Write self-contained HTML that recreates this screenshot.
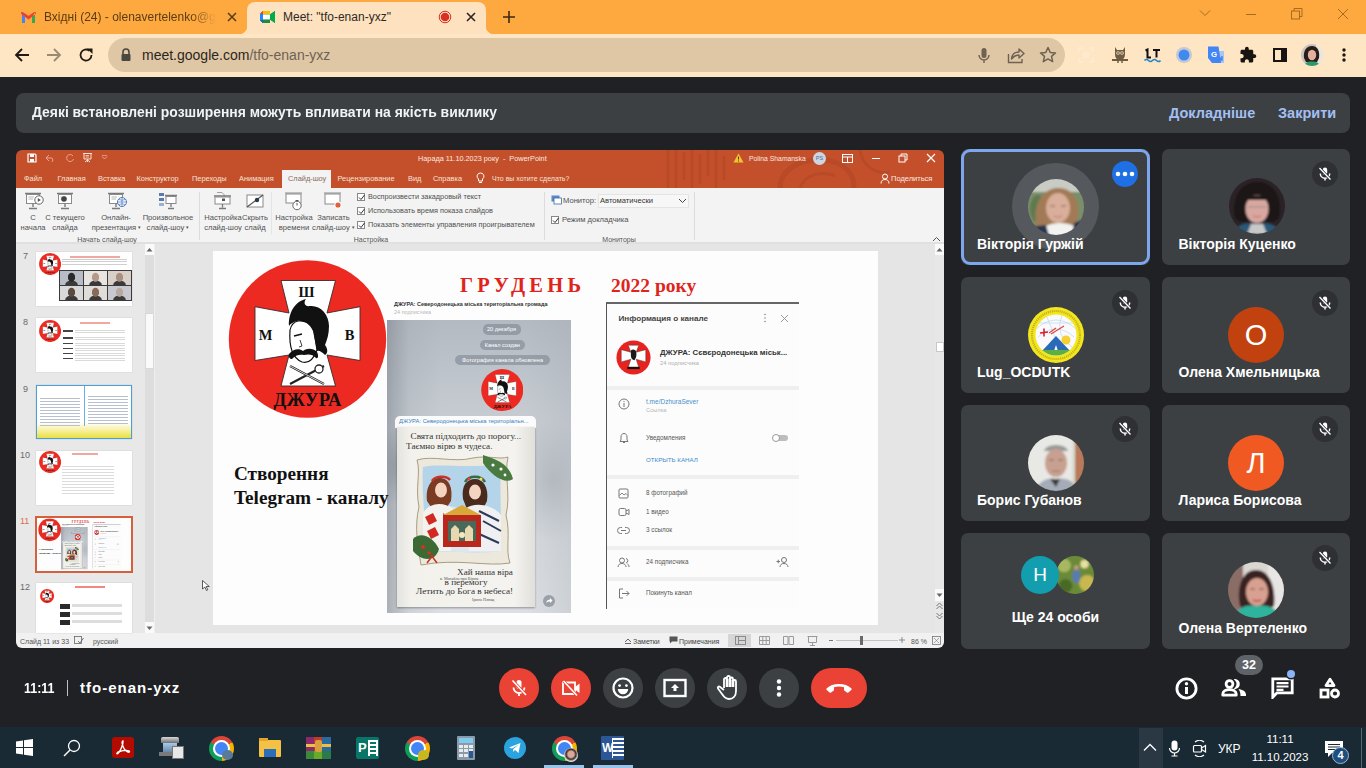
<!DOCTYPE html>
<html><head><meta charset="utf-8">
<style>
*{margin:0;padding:0;box-sizing:border-box}
html,body{width:1366px;height:768px;overflow:hidden;background:#202124;font-family:"Liberation Sans",sans-serif}
.a{position:absolute}
#tabs{left:0;top:0;width:1366px;height:34px;background:#FEA940}
#tool{left:0;top:34px;width:1366px;height:43px;background:#FEE5C4}
#meet{left:0;top:77px;width:1366px;height:651px;background:#202124}
#taskbar{left:0;top:727px;width:1366px;height:41px;background:#1A2A35}
.banner{left:16px;top:93px;width:1334px;height:40px;background:#3C4043;border-radius:8px}
.tile{width:188px;height:116px;background:#3C4043;border-radius:7px}
.name{position:absolute;left:16px;bottom:14px;color:#fff;font-weight:bold;font-size:14px;white-space:nowrap}
</style></head><body>
<svg width="0" height="0" style="position:absolute"><defs><g id="logo">
<circle cx="307.5" cy="339" r="78.7" fill="#EC2A22"/>
<path d="M281 280.5H335.5L327 313L360 306.7V360.5L327 355L335.5 386H281L289 355L255 360.5V306.7L289 313Z" fill="#fff" stroke="#3A2A2A" stroke-width="0.9" stroke-linejoin="miter"/>
<text x="306.5" y="296.5" text-anchor="middle" font-family="Liberation Serif" font-weight="bold" font-size="14.5" fill="#111">Ш</text>
<text x="265.5" y="339.5" text-anchor="middle" font-family="Liberation Serif" font-weight="bold" font-size="14.5" fill="#111">М</text>
<text x="349.5" y="339.5" text-anchor="middle" font-family="Liberation Serif" font-weight="bold" font-size="14.5" fill="#111">В</text>
<path d="M290 330C289 345 292 358 302 362C309 364 314 358 317 350L314 330C311 323 304 320 298 321C294 322 291 325 290 330Z" fill="#fff" stroke="#111" stroke-width="1.2"/>
<path d="M289 326C288 312 296 301 306 299C303 303 305 307 310 306C320 305 329 314 329 326C329 334 327 340 325 345C328 349 328 353 325 355C322 352 319 350 317 351L313 331C310 324 304 320 297 321C293 322 290 324 289 326Z" fill="#111"/>
<path d="M308 304C312 300 316 302 314 306" fill="none" stroke="#fff" stroke-width=".8"/>
<path d="M294 336L302 334" stroke="#111" stroke-width="1.4"/>
<path d="M300 340L302 346L299 347" fill="none" stroke="#111" stroke-width=".8"/>
<path d="M289 354C293 349 299 348 303 351C307 348 313 348 317 352C319 356 318 359 316 358C313 354 308 354 304 355C300 354 295 355 292 359C290 359 288 357 289 354Z" fill="#111"/>
<path d="M290 366L324 384M324 366L290 384" stroke="#222" stroke-width="2.2"/>
<path d="M290 366L324 384" stroke="#fff" stroke-width="0.8"/>
<circle cx="319" cy="369" r="4" fill="#fff" stroke="#222" stroke-width="1.3"/>
<text x="307.5" y="406" text-anchor="middle" font-family="Liberation Serif" font-weight="bold" font-size="18.5" fill="#111" letter-spacing="0.3">ДЖУРА</text>
</g></defs></svg>
<div id="tabs" class="a"></div>
<div id="tool" class="a"></div>
<div id="meet" class="a"></div>
<div id="taskbar" class="a"></div>

<!-- CHROME HEADER -->
<div class="a" style="left:247px;top:2px;width:239px;height:32px;background:#FEE1BE;border-radius:8px 8px 0 0"></div>
<div class="a" style="left:239px;top:26px;width:8px;height:8px;background:radial-gradient(circle at 0 0,#FEA940 8px,#FEE1BE 8.5px)"></div>
<div class="a" style="left:486px;top:26px;width:8px;height:8px;background:radial-gradient(circle at 100% 0,#FEA940 8px,#FEE1BE 8.5px)"></div>
<svg class="a" style="left:21px;top:12px" width="15" height="11" viewBox="0 0 15 11"><path d="M1 2 L1 11 L4 11 L4 4.5Z" fill="#4285F4"/><path d="M11 4.5 L11 11 L14 11 L14 2Z" fill="#34A853"/><path d="M1 1.5 L7.5 6.5 L14 1.5 L14 0.5 L11 2.5 L7.5 5 L4 2.5 L1 0.5Z" fill="#EA4335" stroke="#EA4335" stroke-width="1.6"/><path d="M14 0.5 L14 2.5 L12 3.8Z" fill="#FBBC04"/></svg>
<div class="a" style="left:44px;top:9px;width:172px;height:18px;overflow:hidden;white-space:nowrap;font-size:12px;line-height:17px;color:#5A3C14;-webkit-mask-image:linear-gradient(90deg,#000 85%,transparent)">Вхідні (24) - olenavertelenko@gmail.com</div>
<svg class="a" style="left:227px;top:12px" width="10" height="10" viewBox="0 0 10 10"><path d="M1 1L9 9M9 1L1 9" stroke="#5A3E16" stroke-width="1.6"/></svg>
<svg class="a" style="left:260px;top:11px" width="15" height="12" viewBox="0 0 15 12"><path d="M3 0 H10 V3.5 L15 0 V12 L10 8.5 V12 H3 L0 9 V3 Z" fill="#00832D"/><path d="M3 0 H10 V3.5 H3Z" fill="#FBBC04"/><path d="M0 3 L3 0 V9 L0 9Z" fill="#4285F4"/><path d="M0 9 H10 V12 H3Z" fill="#1E8E3E"/><path d="M10 3.5 L15 0 V12 L10 8.5Z" fill="#00AC47"/><rect x="3" y="3.5" width="7" height="5" fill="#fff"/><path d="M0 3 H3 V9 H0Z" fill="#2684FC"/><path d="M3 9 V12 L0 9Z" fill="#0066DA"/><path d="M0 3 L3 0 V3Z" fill="#EA4335"/></svg>
<div class="a" style="left:283px;top:9px;white-space:nowrap;font-size:12px;line-height:17px;color:#2E2A24">Meet: "tfo-enan-yxz"</div>
<svg class="a" style="left:438px;top:10px" width="14" height="14" viewBox="0 0 14 14"><circle cx="7" cy="7" r="5.8" fill="none" stroke="#D93025" stroke-width="1"/><circle cx="7" cy="7" r="4.3" fill="#D93025"/></svg>
<svg class="a" style="left:466px;top:12px" width="10" height="10" viewBox="0 0 10 10"><path d="M1 1L9 9M9 1L1 9" stroke="#2A2520" stroke-width="1.6"/></svg>
<svg class="a" style="left:502px;top:10px" width="14" height="14" viewBox="0 0 14 14"><path d="M7 1V13M1 7H13" stroke="#3A2A14" stroke-width="1.6"/></svg>
<svg class="a" style="left:1199px;top:9px" width="12" height="8" viewBox="0 0 12 8"><path d="M1 1.5L6 6.5L11 1.5" fill="none" stroke="#A86A1E" stroke-width="1"/></svg>
<div class="a" style="left:1246px;top:14px;width:10px;height:1px;background:#A86A1E"></div>
<svg class="a" style="left:1291px;top:8px" width="12" height="12" viewBox="0 0 12 12"><rect x="0.5" y="3" width="8" height="8" fill="none" stroke="#A86A1E"/><path d="M3 3V0.5H11V8.5H8.5" fill="none" stroke="#A86A1E"/></svg>
<svg class="a" style="left:1337px;top:8px" width="12" height="12" viewBox="0 0 12 12"><path d="M1 1L11 11M11 1L1 11" stroke="#A86A1E" stroke-width="1"/></svg>
<!-- TOOLBAR -->
<svg class="a" style="left:14px;top:47px" width="16" height="16" viewBox="0 0 16 16"><path d="M15 8H2M8 2L2 8L8 14" fill="none" stroke="#1F1A14" stroke-width="1.8"/></svg>
<svg class="a" style="left:46px;top:47px" width="16" height="16" viewBox="0 0 16 16"><path d="M1 8H14M8 2L14 8L8 14" fill="none" stroke="#9A8A74" stroke-width="1.8"/></svg>
<svg class="a" style="left:78px;top:47px" width="16" height="16" viewBox="0 0 16 16"><path d="M13.5 8A5.5 5.5 0 1 1 11.5 3.8" fill="none" stroke="#1F1A14" stroke-width="1.8"/><path d="M9 1.5H14.5V7Z" fill="#1F1A14"/></svg>
<div class="a" style="left:108px;top:38px;width:957px;height:34px;background:#DFC7A6;border-radius:17px"></div>
<svg class="a" style="left:120px;top:48px" width="12" height="14" viewBox="0 0 12 14"><path d="M3 6V4A3 3 0 0 1 9 4V6" fill="none" stroke="#4A4640" stroke-width="1.6"/><rect x="1.5" y="6" width="9" height="7" rx="1" fill="#4A4640"/></svg>
<div class="a" style="left:142px;top:46px;white-space:nowrap;font-size:14px;line-height:18px;color:#2A2620">meet.google.com<span style="color:#6E6252">/tfo-enan-yxz</span></div>

<svg class="a" style="left:977px;top:47px" width="14" height="17" viewBox="0 0 14 17"><rect x="4.5" y="1" width="5" height="10" rx="2.5" fill="#6E6252"/><path d="M2 8A5 5 0 0 0 12 8M7 13V16" fill="none" stroke="#6E6252" stroke-width="1.4"/></svg>
<svg class="a" style="left:1007px;top:46px" width="18" height="18" viewBox="0 0 18 18"><path d="M1.5 8V16.5H15V13" fill="none" stroke="#6E6252" stroke-width="1.4"/><path d="M4.5 13C5 8 8 6 12 6V3L17 7.5L12 12V9C8.5 9 6.5 10.5 4.5 13Z" fill="none" stroke="#6E6252" stroke-width="1.4" stroke-linejoin="round"/></svg>
<svg class="a" style="left:1039px;top:46px" width="18" height="18" viewBox="0 0 18 18"><path d="M9 1.5L11.2 6.4L16.5 6.9L12.5 10.4L13.7 15.6L9 12.9L4.3 15.6L5.5 10.4L1.5 6.9L6.8 6.4Z" fill="none" stroke="#6E6252" stroke-width="1.5" stroke-linejoin="round"/></svg>
<svg class="a" style="left:1078px;top:47px;opacity:.45" width="16" height="16" viewBox="0 0 16 16"><path d="M1 5V1H5M11 1H15V5M15 11V15H11M5 15H1V11" fill="none" stroke="#FFF2E0" stroke-width="2"/><rect x="5" y="5" width="6" height="6" fill="#FFF2E0"/></svg>
<svg class="a" style="left:1111px;top:45px" width="18" height="20" viewBox="0 0 18 20"><path d="M4 2L6 5H12L14 2V9C14 13 12 15 9 15C6 15 4 13 4 9Z" fill="#6F5C42"/><circle cx="7" cy="8" r="1.8" fill="#E8D6BA"/><circle cx="11" cy="8" r="1.8" fill="#E8D6BA"/><circle cx="7" cy="8" r="0.8" fill="#333"/><circle cx="11" cy="8" r="0.8" fill="#333"/><path d="M1 15H17" stroke="#6F5C42" stroke-width="2"/><path d="M7 15V18M11 15V18" stroke="#6F5C42" stroke-width="1.5"/></svg>
<svg class="a" style="left:1144px;top:48px" width="17" height="15" viewBox="0 0 17 15"><path d="M1.5 2.5L3.5 1.5V9.5H7M9 2H16M12.5 2V9.5" fill="none" stroke="#111" stroke-width="2"/><path d="M0.5 12.5Q2.5 10.5 4.5 12.5T8.5 12.5T12.5 12.5T16.5 12.5" fill="none" stroke="#1E8AC8" stroke-width="1.6"/></svg>
<svg class="a" style="left:1175px;top:46px" width="18" height="18" viewBox="0 0 18 18"><circle cx="9" cy="9" r="8" fill="#C6C8D2"/><circle cx="9" cy="9" r="5.5" fill="#3F8AF0"/></svg>
<svg class="a" style="left:1207px;top:46px" width="18" height="18" viewBox="0 0 18 18"><path d="M6 5H17V17H10Z" fill="#A9C4F5"/><path d="M1 0.5H11.5L14 17H5L1 12Z" fill="#4285F4"/><text x="4" y="11" font-family="Liberation Sans" font-weight="bold" font-size="8" fill="#fff">G</text><path d="M10 9L15 14M11 14H15V10" stroke="#4285F4" stroke-width="1.5" fill="none"/></svg>
<svg class="a" style="left:1239px;top:46px" width="18" height="18" viewBox="0 0 24 24"><path d="M20.5 11H19V7c0-1.1-.9-2-2-2h-4V3.5C13 2.12 11.88 1 10.5 1S8 2.12 8 3.5V5H4c-1.1 0-1.99.9-1.99 2v3.8H3.5c1.49 0 2.7 1.21 2.7 2.7s-1.21 2.7-2.7 2.7H2V20c0 1.1.9 2 2 2h3.8v-1.5c0-1.490 1.21-2.7 2.7-2.7 1.49 0 2.7 1.21 2.7 2.7V22H17c1.1 0 2-.9 2-2v-4h1.5c1.38 0 2.5-1.12 2.5-2.5S21.88 11 20.5 11z" fill="#171411"/></svg>
<svg class="a" style="left:1273px;top:48px" width="14" height="14" viewBox="0 0 14 14"><rect x="1" y="1" width="12" height="12" fill="none" stroke="#171411" stroke-width="2"/><rect x="8" y="1" width="5" height="12" fill="#171411"/></svg>
<svg class="a" style="left:1301px;top:44px" width="22" height="22" viewBox="0 0 22 22"><defs><clipPath id="avc"><circle cx="11" cy="11" r="11"/></clipPath><filter id="avf"><feGaussianBlur stdDeviation=".5"/></filter></defs><g clip-path="url(#avc)" filter="url(#avf)"><rect width="22" height="22" fill="#C8C4C0"/><rect x="15" width="7" height="22" fill="#E8E6E2"/><path d="M3 14C2 6 6 2 11 2C16 2 19 6 18 14L16 18H5Z" fill="#2A1A16"/><ellipse cx="11" cy="11" rx="4.2" ry="5.2" fill="#E0B0A0"/><path d="M2 23C4 18 8 17 11 17.5C14 17 18 18 20 23Z" fill="#2A9A6A"/></g></svg>
<svg class="a" style="left:1340px;top:47px" width="8" height="16" viewBox="0 0 8 16"><circle cx="4" cy="3" r="1.7" fill="#1A1612"/><circle cx="4" cy="8" r="1.7" fill="#1A1612"/><circle cx="4" cy="13" r="1.7" fill="#1A1612"/></svg>
<div class="a banner"></div>

<!-- POWERPOINT WINDOW -->
<div class="a" id="ppw" style="left:0;top:0;width:1366px;height:768px;clip-path:inset(150px 422px 120px 16px round 6px)">
<div class="a" style="left:16px;top:150px;width:928px;height:38px;background:#C4502B"></div>
<svg class="a" style="left:640px;top:150px" width="260" height="38" viewBox="0 0 260 38"><g fill="none" stroke="rgba(110,40,20,.14)" stroke-width="3" style="filter:blur(.6px)">
<path d="M28 0V38M36 0V38M44 2V30M52 0V38M60 4V34M68 0V26M76 0V38M84 6V30"/>
<path d="M140 38C140 20 160 8 185 10C205 12 215 25 214 38" stroke-width="5"/>
<path d="M160 38C165 25 180 20 195 26"/>
<path d="M220 0C222 15 235 25 250 22"/>
</g></svg>
<div class="a" style="left:16px;top:188px;width:928px;height:55px;background:#F3F3F3"></div>
<div class="a" style="left:16px;top:242px;width:928px;height:2px;background:#E0E0E0"></div>
<div class="a" style="left:16px;top:244px;width:139px;height:389px;background:#E8E8E8"></div>
<div class="a" style="left:155px;top:244px;width:780px;height:389px;background:#E5E5E5"></div>
<div class="a" style="left:935px;top:244px;width:9px;height:389px;background:#EAEAEA"></div>
<div class="a" style="left:16px;top:633px;width:928px;height:15px;background:#F1F1F1"></div>
<svg class="a" style="left:27px;top:153px" width="10" height="10" viewBox="0 0 10 10"><path d="M1 1H8L9 2V9H1Z" fill="none" stroke="#fff" stroke-width="1.2"/><rect x="3" y="1" width="4" height="3" fill="#fff"/><rect x="3" y="6" width="4" height="3" fill="#fff"/></svg>
<svg class="a" style="left:44px;top:154px" width="14" height="8" viewBox="0 0 14 8"><path d="M2 4H8A3 3 0 0 1 8 8M2 4L5 1M2 4L5 7" fill="none" stroke="#E8A48C" stroke-width="1"/></svg>
<svg class="a" style="left:66px;top:153px" width="9" height="10" viewBox="0 0 9 10"><path d="M7 3A3.5 3.5 0 1 0 7.5 6" fill="none" stroke="#E8A48C" stroke-width="1"/></svg>
<svg class="a" style="left:82px;top:152px" width="12" height="12" viewBox="0 0 12 12"><path d="M1 1.5H10M2 2V7H9V2M5.5 7V10M3 10L5.5 8L8 10" fill="none" stroke="#F6E0D6" stroke-width="1"/><path d="M3.5 3.5H7M3.5 5H7" stroke="#F6E0D6" stroke-width=".8"/></svg>
<svg class="a" style="left:101px;top:155px" width="7" height="6" viewBox="0 0 7 6"><path d="M1 1.5L3.5 4L6 1.5" fill="none" stroke="#E8A48C" stroke-width="1"/><path d="M1 0.5H6" stroke="#E8A48C" stroke-width=".8"/></svg>
<div class="a" style="left:418px;top:153.5px;font-size:7.3px;line-height:10px;color:#F8E8E0;white-space:nowrap;">Нарада 11.10.2023 року&nbsp; - &nbsp;PowerPoint</div>
<svg class="a" style="left:733px;top:153px" width="11" height="10" viewBox="0 0 11 10"><path d="M5.5 0.5L10.5 9.5H0.5Z" fill="#F2C230"/><path d="M5.5 3.5V6.5M5.5 7.5V8.5" stroke="#5A3A10" stroke-width="1"/></svg>
<div class="a" style="left:749px;top:153.5px;font-size:6.8px;line-height:10px;color:#F8E8E0;white-space:nowrap;">Polina Shamanska</div>
<div class="a" style="left:813px;top:152px;width:13px;height:13px;border-radius:50%;background:#CCD6E2;color:#4A6A98;font-size:5.5px;line-height:13px;text-align:center">PS</div>
<svg class="a" style="left:842px;top:154px" width="11" height="9" viewBox="0 0 11 9"><rect x="0.5" y="0.5" width="10" height="8" fill="none" stroke="#fff" stroke-width="1"/><path d="M0.5 3H10.5M5.5 3V8.5" stroke="#fff" stroke-width="1"/></svg>
<div class="a" style="left:872px;top:158px;width:8px;height:1px;background:#fff"></div>
<svg class="a" style="left:898px;top:153px" width="10" height="10" viewBox="0 0 10 10"><rect x="1" y="3" width="6" height="6" fill="none" stroke="#fff" stroke-width="1"/><path d="M3 3V1H9V7H7" fill="none" stroke="#fff" stroke-width="1"/></svg>
<svg class="a" style="left:926px;top:153px" width="10" height="10" viewBox="0 0 10 10"><path d="M1 1L9 9M9 1L1 9" stroke="#fff" stroke-width="1.1"/></svg>
<div class="a" style="left:282px;top:170px;width:49px;height:18px;background:#F3F3F3"></div>
<div class="a" style="left:24px;top:174px;font-size:7.4px;line-height:10px;color:#F6E2D8;white-space:nowrap;">Файл</div>
<div class="a" style="left:57.5px;top:174px;font-size:7.4px;line-height:10px;color:#F6E2D8;white-space:nowrap;">Главная</div>
<div class="a" style="left:98px;top:174px;font-size:7.4px;line-height:10px;color:#F6E2D8;white-space:nowrap;">Вставка</div>
<div class="a" style="left:136.5px;top:174px;font-size:7.4px;line-height:10px;color:#F6E2D8;white-space:nowrap;">Конструктор</div>
<div class="a" style="left:192px;top:174px;font-size:7.4px;line-height:10px;color:#F6E2D8;white-space:nowrap;">Переходы</div>
<div class="a" style="left:239px;top:174px;font-size:7.4px;line-height:10px;color:#F6E2D8;white-space:nowrap;">Анимация</div>
<div class="a" style="left:337.5px;top:174px;font-size:7.4px;line-height:10px;color:#F6E2D8;white-space:nowrap;">Рецензирование</div>
<div class="a" style="left:408px;top:174px;font-size:7.4px;line-height:10px;color:#F6E2D8;white-space:nowrap;">Вид</div>
<div class="a" style="left:433px;top:174px;font-size:7.4px;line-height:10px;color:#F6E2D8;white-space:nowrap;">Справка</div>
<div class="a" style="left:288px;top:174px;font-size:7.4px;line-height:10px;color:#8A6A60;white-space:nowrap;">Слайд-шоу</div>
<svg class="a" style="left:476px;top:172px" width="9" height="12" viewBox="0 0 9 12"><path d="M4.5 1A3.3 3.3 0 0 0 2.5 7V9H6.5V7A3.3 3.3 0 0 0 4.5 1ZM3 10.5H6" fill="none" stroke="#fff" stroke-width="1"/></svg>
<div class="a" style="left:492px;top:174px;font-size:7px;line-height:10px;color:#F6E2D8;white-space:nowrap;">Что вы хотите сделать?</div>
<svg class="a" style="left:880px;top:173px" width="10" height="11" viewBox="0 0 10 11"><circle cx="5" cy="3.5" r="2.5" fill="none" stroke="#fff" stroke-width="1"/><path d="M1 10.5C1 7.5 3 6.5 5 6.5S9 7.5 9 10.5" fill="none" stroke="#fff" stroke-width="1"/></svg>
<div class="a" style="left:891px;top:174px;font-size:7.5px;line-height:9.5px;color:#FBEAE2;white-space:nowrap;">Поделиться</div>
<!-- SLIDE -->
<div class="a" style="left:213px;top:250.5px;width:665px;height:374.5px;background:#FDFDFD"></div>
<svg class="a" style="left:228px;top:260px" width="160" height="160" viewBox="228 260 160 160">
<circle cx="307.5" cy="339" r="78.7" fill="#EC2A22"/>
<path d="M281 280.5H335.5L327 313L360 306.7V360.5L327 355L335.5 386H281L289 355L255 360.5V306.7L289 313Z" fill="#fff" stroke="#3A2A2A" stroke-width="0.9" stroke-linejoin="miter"/>
<text x="306.5" y="296.5" text-anchor="middle" font-family="Liberation Serif" font-weight="bold" font-size="14.5" fill="#111">Ш</text>
<text x="265.5" y="339.5" text-anchor="middle" font-family="Liberation Serif" font-weight="bold" font-size="14.5" fill="#111">М</text>
<text x="349.5" y="339.5" text-anchor="middle" font-family="Liberation Serif" font-weight="bold" font-size="14.5" fill="#111">В</text>
<path d="M290 330C289 345 292 358 302 362C309 364 314 358 317 350L314 330C311 323 304 320 298 321C294 322 291 325 290 330Z" fill="#fff" stroke="#111" stroke-width="1.2"/>
<path d="M289 326C288 312 296 301 306 299C303 303 305 307 310 306C320 305 329 314 329 326C329 334 327 340 325 345C328 349 328 353 325 355C322 352 319 350 317 351L313 331C310 324 304 320 297 321C293 322 290 324 289 326Z" fill="#111"/>
<path d="M308 304C312 300 316 302 314 306" fill="none" stroke="#fff" stroke-width=".8"/>
<path d="M294 336L302 334" stroke="#111" stroke-width="1.4"/>
<path d="M300 340L302 346L299 347" fill="none" stroke="#111" stroke-width=".8"/>
<path d="M289 354C293 349 299 348 303 351C307 348 313 348 317 352C319 356 318 359 316 358C313 354 308 354 304 355C300 354 295 355 292 359C290 359 288 357 289 354Z" fill="#111"/>
<path d="M290 366L324 384M324 366L290 384" stroke="#222" stroke-width="2.2"/>
<path d="M290 366L324 384" stroke="#fff" stroke-width="0.8"/>
<circle cx="319" cy="369" r="4" fill="#fff" stroke="#222" stroke-width="1.3"/>
<text x="307.5" y="406" text-anchor="middle" font-family="Liberation Serif" font-weight="bold" font-size="18.5" fill="#111" letter-spacing="0.3">ДЖУРА</text>
</svg>
<div class="a" style="left:460px;top:273px;font-family:'Liberation Serif',serif;font-weight:bold;font-size:20.5px;line-height:24px;color:#E0241C;letter-spacing:4.3px;white-space:nowrap">ГРУДЕНЬ</div>
<div class="a" style="left:611px;top:273.5px;font-family:'Liberation Serif',serif;font-weight:bold;font-size:19.5px;line-height:24px;color:#E0241C;white-space:nowrap">2022 року</div>
<div class="a" style="left:234px;top:462px;font-family:'Liberation Serif',serif;font-weight:bold;font-size:19.2px;line-height:23.5px;color:#111;white-space:nowrap;z-index:2">Створення<br>Telegram - каналу</div>
<div class="a" style="left:394px;top:300px;font-size:5.5px;line-height:8px;color:#333;white-space:nowrap;font-weight:bold">ДЖУРА: Северодонецька міська територіальна громада</div>
<div class="a" style="left:394px;top:309px;font-size:5.5px;line-height:7.5px;color:#B8B8B8;white-space:nowrap;">24 подписчика</div>
<div class="a" style="left:387px;top:320px;width:184px;height:293px;background:linear-gradient(180deg,#B4BAC2 0,#C4CAD0 30%,#D2D6DB 60%,#DCE0E4 100%)"></div>
<div class="a" style="left:387px;top:320px;width:184px;height:293px;background:linear-gradient(90deg,rgba(110,118,128,.45) 0,rgba(150,156,164,.2) 12%,transparent 30%,transparent 75%,rgba(160,166,174,.25) 100%)"></div>
<div class="a" style="left:387px;top:320px;width:184px;height:293px;background:radial-gradient(ellipse 40px 60px at 90% 55%,rgba(140,148,158,.35),transparent),radial-gradient(ellipse 30px 40px at 8% 50%,rgba(90,98,108,.35),transparent)"></div>
<div class="a" style="left:482.5px;top:324px;width:38.0px;height:10.5px;border-radius:5px;background:rgba(120,130,140,.55);color:#fff;font-size:5.6px;line-height:10.5px;text-align:center;white-space:nowrap">20 декабря</div>
<div class="a" style="left:479.5px;top:339.5px;width:45.5px;height:10.0px;border-radius:5px;background:rgba(120,130,140,.55);color:#fff;font-size:5.6px;line-height:10.0px;text-align:center;white-space:nowrap">Канал создан</div>
<div class="a" style="left:455px;top:355px;width:95px;height:10px;border-radius:5px;background:rgba(120,130,140,.55);color:#fff;font-size:5.6px;line-height:10px;text-align:center;white-space:nowrap">Фотография канала обновлена</div>
<svg class="a" style="left:480.79px;top:368.92px" width="42.69" height="42.69" viewBox="228 260 160 160"><use href="#logo"/></svg>
<div class="a" style="left:395px;top:416px;width:141px;height:12px;background:rgba(255,255,255,.92);border-radius:5px 5px 0 0"></div>
<div class="a" style="left:399px;top:418px;font-size:5.8px;line-height:7.8px;color:#3A7EC0;white-space:nowrap;">ДЖУРА: Северодонецька міська територіальн...</div>
<div class="a" style="left:397px;top:427px;width:138px;height:180px;background:linear-gradient(90deg,#E4E4E0,#F2F1EC 10%,#F4F3EF 85%,#E0DFDA);box-shadow:0 1px 2px rgba(0,0,0,.35)"></div>
<div class="a" style="left:410.5px;top:431px;font-size:9.2px;line-height:11px;color:#333;white-space:nowrap;font-family:'Liberation Serif',serif">Свята підходить до порогу...</div>
<div class="a" style="left:406px;top:440.5px;font-size:9.2px;line-height:11px;color:#333;white-space:nowrap;font-family:'Liberation Serif',serif">Таємно вірю в чудеса.</div>
<svg class="a" style="left:413px;top:455px" width="100" height="112" viewBox="0 0 100 112"><filter id="pblur"><feGaussianBlur stdDeviation=".35"/></filter><g filter="url(#pblur)">
<path d="M4 5C20 0 40 8 60 3C76 0 86 5 95 2C91 20 98 40 93 60C98 80 92 94 97 108C74 112 44 103 8 110C5 92 1 72 6 52C2 32 8 18 4 5Z" fill="#ECE8DC" stroke="#A89C80" stroke-width="1"/>
<path d="M10 12C28 8 50 14 88 9C86 40 90 70 86 96C60 100 34 94 12 98C14 70 8 40 10 12Z" fill="#B4D4EA"/>
<path d="M10 60C20 50 40 48 50 56C60 48 80 50 88 60V96C60 100 34 94 12 98Z" fill="#DCE6EE"/>
<path d="M14 46C12 30 20 22 28 23C36 24 40 32 38 46L34 52H18Z" fill="#7A3A22"/>
<ellipse cx="28" cy="35" rx="6" ry="7.5" fill="#F2D4C0"/>
<path d="M19 26C22 21 33 20 37 25" fill="none" stroke="#C8302A" stroke-width="2.5"/>
<path d="M50 44C48 30 54 24 62 24C70 24 76 32 74 46L70 54H54Z" fill="#4A2A1E"/>
<ellipse cx="62" cy="37" rx="6" ry="7.5" fill="#F2D4C0"/>
<path d="M52 27C56 20 68 20 72 27" fill="none" stroke="#3A6A3A" stroke-width="2.5"/><circle cx="56" cy="24" r="1.5" fill="#E84040"/><circle cx="68" cy="24" r="1.5" fill="#F0E060"/>
<path d="M10 58C16 48 30 46 40 54L38 96H10Z" fill="#F4F2EE"/>
<path d="M12 62L20 58L24 66L16 70ZM14 76L22 72L26 80L18 84ZM30 58L36 62L32 70Z" fill="#D02A20"/>
<path d="M52 54C62 46 80 50 88 60V96H56Z" fill="#F0F0F2"/>
<path d="M66 56L86 66M70 66L88 76M64 78L86 88" stroke="#2A3A5A" stroke-width="2"/>
<path d="M30 60L49 50L68 60Z" fill="#D8A838"/>
<rect x="30" y="60" width="38" height="32" fill="#B8281A"/>
<rect x="35" y="66" width="28" height="20" fill="#4A6A5A"/>
<path d="M38 86V74L42 70L46 74V86M52 86V74L56 70L60 74V86" fill="#E8D8B0"/>
<circle cx="49" cy="80" r="3" fill="#F4E8C0"/>
<path d="M0 84C8 76 20 82 26 94C22 108 8 106 0 96Z" fill="#3A6A34"/>
<circle cx="10" cy="92" r="2" fill="#D83020"/><circle cx="16" cy="98" r="1.8" fill="#D83020"/><path d="M18 100L24 108M20 100L14 108" stroke="#C83028" stroke-width="1.5"/>
<path d="M70 0C82 4 96 8 100 24C92 30 78 20 70 8Z" fill="#4A7A40"/>
<circle cx="80" cy="10" r="1.6" fill="#fff"/><circle cx="88" cy="14" r="1.6" fill="#fff"/><circle cx="92" cy="20" r="1.4" fill="#fff"/>
</g></svg>
<div class="a" style="left:457px;top:567px;font-size:9.2px;line-height:11px;color:#333;white-space:nowrap;font-family:'Liberation Serif',serif">Хай наша віра</div>
<div class="a" style="left:440px;top:576px;font-size:4px;line-height:6px;color:#555;white-space:nowrap;font-family:'Liberation Serif',serif"><span style="font-size:4px;vertical-align:top">в. Михайло при Вірюк</span></div>
<div class="a" style="left:444.5px;top:576.5px;font-size:9.2px;line-height:11px;color:#333;white-space:nowrap;font-family:'Liberation Serif',serif">в перемогу</div>
<div class="a" style="left:416px;top:585.5px;font-size:9.2px;line-height:11px;color:#333;white-space:nowrap;font-family:'Liberation Serif',serif">Летить до Бога в небеса!</div>
<div class="a" style="left:472px;top:597px;font-size:4.2px;line-height:6.2px;color:#555;white-space:nowrap;font-family:'Liberation Serif',serif">Ірина Плющ</div>
<div class="a" style="left:542.5px;top:595px;width:12px;height:12px;border-radius:50%;background:#9AA0A8"></div>
<svg class="a" style="left:544.5px;top:597px" width="8" height="8" viewBox="0 0 8 8"><path d="M1 6C1.5 3.5 3.5 2.5 5 2.5V1L7.5 3.5L5 6V4.5C3.5 4.5 2 5 1 6Z" fill="#fff"/></svg>
<div class="a" style="left:606px;top:302px;width:193px;height:307px;background:#FCFCFC;border-left:1.2px solid #555;border-top:2px solid #666"></div>
<div class="a" style="left:618.5px;top:313.5px;font-size:8.1px;line-height:10px;color:#444;white-space:nowrap;font-weight:bold">Информация о канале</div>
<svg class="a" style="left:763px;top:313px" width="4" height="10" viewBox="0 0 4 10"><circle cx="2" cy="1.5" r=".8" fill="#888"/><circle cx="2" cy="5" r=".8" fill="#888"/><circle cx="2" cy="8.5" r=".8" fill="#888"/></svg>
<svg class="a" style="left:780px;top:314px" width="9" height="9" viewBox="0 0 9 9"><path d="M1 1L8 8M8 1L1 8" stroke="#999" stroke-width="1"/></svg>
<svg class="a" style="left:616.0px;top:340.0px" width="35.0" height="35.0" viewBox="0 0 40 40"><circle cx="20" cy="20" r="19.5" fill="#E8231F"/><path d="M14 6H26L23 14L34 11V25L23 22L26 31H14L17 22L6 25V11L17 14Z" fill="#fff" stroke="#333" stroke-width=".5"/><path d="M17 12C19 10 23 11 23 14C24 17 23 21 21 23C19 23 17 21 17 18Z" fill="#1A1A1A"/><path d="M13 32H27" stroke="#111" stroke-width="2.5"/></svg>
<div class="a" style="left:660px;top:348px;font-size:7.8px;line-height:10px;color:#333;white-space:nowrap;font-weight:bold">ДЖУРА: Сєвєродонецька міськ...</div>
<div class="a" style="left:660px;top:360px;font-size:5.8px;line-height:7.8px;color:#B0B0B0;white-space:nowrap;">24 подписчика</div>
<div class="a" style="left:607px;top:386px;width:192px;height:4px;background:#EFEFEF"></div>
<div class="a" style="left:607px;top:475px;width:192px;height:4px;background:#EFEFEF"></div>
<div class="a" style="left:607px;top:546px;width:192px;height:4px;background:#EFEFEF"></div>
<div class="a" style="left:607px;top:577px;width:192px;height:4px;background:#EFEFEF"></div>
<svg class="a" style="left:618px;top:398px" width="12" height="12" viewBox="0 0 12 12"><circle cx="6" cy="6" r="5" fill="none" stroke="#777" stroke-width="1"/><path d="M6 5V9M6 3V4" stroke="#777" stroke-width="1"/></svg>
<div class="a" style="left:646px;top:397.5px;font-size:6.5px;line-height:8.3px;color:#4A90C8;white-space:nowrap;">t.me/DzhuraSever</div>
<div class="a" style="left:646px;top:407px;font-size:5.8px;line-height:7.8px;color:#B8B8B8;white-space:nowrap;">Ссылка</div>
<svg class="a" style="left:619px;top:432px" width="10" height="12" viewBox="0 0 10 12"><path d="M5 1.5C3 1.5 2 3 2 5V8L1 9.5H9L8 8V5C8 3 7 1.5 5 1.5ZM4 10.5H6" fill="none" stroke="#777" stroke-width="1"/></svg>
<div class="a" style="left:646px;top:434px;font-size:6.3px;line-height:8.3px;color:#555;white-space:nowrap;">Уведомления</div>
<div class="a" style="left:773px;top:435px;width:15px;height:6px;border-radius:3px;background:#BDBDBD"></div><div class="a" style="left:772px;top:434px;width:8px;height:8px;border-radius:50%;background:#fff;border:1px solid #999"></div>
<div class="a" style="left:646px;top:456px;font-size:6.2px;line-height:8.2px;color:#3A8AC8;white-space:nowrap;">ОТКРЫТЬ КАНАЛ</div>
<svg class="a" style="left:618px;top:488px" width="11" height="11" viewBox="0 0 11 11"><rect x="1" y="1" width="9" height="9" rx="1" fill="none" stroke="#777" stroke-width="1"/><path d="M1.5 7.5L4 5L6 7L8 5.5L10 7.5" fill="none" stroke="#777" stroke-width=".9"/></svg>
<div class="a" style="left:646px;top:489px;font-size:6.3px;line-height:8.3px;color:#555;white-space:nowrap;">8 фотографий</div>
<svg class="a" style="left:618px;top:507px" width="12" height="10" viewBox="0 0 12 10"><rect x="1" y="1.5" width="7" height="7" rx="1.5" fill="none" stroke="#777" stroke-width="1"/><path d="M8 4L11 2.5V7.5L8 6" fill="none" stroke="#777" stroke-width="1"/></svg>
<div class="a" style="left:646px;top:507.5px;font-size:6.3px;line-height:8.3px;color:#555;white-space:nowrap;">1 видео</div>
<svg class="a" style="left:617px;top:526px" width="13" height="9" viewBox="0 0 13 9"><path d="M5 1.5H3.5A3 3 0 0 0 3.5 7.5H5M8 1.5H9.5A3 3 0 0 1 9.5 7.5H8M4 4.5H9" fill="none" stroke="#777" stroke-width="1"/></svg>
<div class="a" style="left:646px;top:525.5px;font-size:6.3px;line-height:8.3px;color:#555;white-space:nowrap;">3 ссылок</div>
<svg class="a" style="left:617px;top:557px" width="13" height="11" viewBox="0 0 13 11"><circle cx="5" cy="3.5" r="2.5" fill="none" stroke="#777" stroke-width="1"/><path d="M1 10C1 7.5 3 6.5 5 6.5S9 7.5 9 10M9 1.5A2.3 2.3 0 0 1 9 6M10.5 7C11.5 7.5 12 8.5 12 10" fill="none" stroke="#777" stroke-width="1"/></svg>
<div class="a" style="left:646px;top:558px;font-size:6.3px;line-height:8.3px;color:#555;white-space:nowrap;">24 подписчика</div>
<svg class="a" style="left:776px;top:556px" width="13" height="12" viewBox="0 0 13 12"><circle cx="8" cy="4" r="2.5" fill="none" stroke="#777" stroke-width="1"/><path d="M4 11C4 8.5 6 7.5 8 7.5S12 8.5 12 11M0.5 5.5H4M2.25 3.75V7.25" fill="none" stroke="#777" stroke-width="1"/></svg>
<svg class="a" style="left:618px;top:588px" width="12" height="11" viewBox="0 0 12 11"><path d="M5 1H1.5V10H5M4 5.5H11M8.5 3L11 5.5L8.5 8" fill="none" stroke="#777" stroke-width="1"/></svg>
<div class="a" style="left:646px;top:588.5px;font-size:6.3px;line-height:8.3px;color:#555;white-space:nowrap;">Покинуть канал</div>
<svg class="a" style="left:202px;top:580px" width="8" height="11" viewBox="0 0 8 11"><path d="M0.5 0.5V9L2.8 7L4.5 10.5L5.8 9.8L4.2 6.5H7.3Z" fill="#fff" stroke="#333" stroke-width=".8"/></svg>
<!-- SLIDE PANEL -->
<div class="a" style="left:23px;top:250.5px;font-size:9px;line-height:11px;color:#6A6A6A;white-space:nowrap;">7</div>
<div class="a" style="left:36px;top:251.5px;width:96px;height:54px;background:#fff;box-shadow:0 0 1px rgba(0,0,0,.25)"></div>
<div class="a" style="left:23px;top:317px;font-size:9px;line-height:11px;color:#6A6A6A;white-space:nowrap;">8</div>
<div class="a" style="left:36px;top:318px;width:96px;height:54px;background:#fff;box-shadow:0 0 1px rgba(0,0,0,.25)"></div>
<div class="a" style="left:23px;top:383.5px;font-size:9px;line-height:11px;color:#6A6A6A;white-space:nowrap;">9</div>
<div class="a" style="left:36px;top:384.5px;width:96px;height:54px;background:#fff;box-shadow:0 0 1px rgba(0,0,0,.25)"></div>
<div class="a" style="left:20px;top:449.5px;font-size:9px;line-height:11px;color:#6A6A6A;white-space:nowrap;">10</div>
<div class="a" style="left:36px;top:450.5px;width:96px;height:54px;background:#fff;box-shadow:0 0 1px rgba(0,0,0,.25)"></div>
<div class="a" style="left:20px;top:516px;font-size:9px;line-height:11px;color:#DC7050;white-space:nowrap;">11</div>
<div class="a" style="left:36px;top:517px;width:96px;height:54px;background:#fff;box-shadow:0 0 1px rgba(0,0,0,.25)"></div>
<div class="a" style="left:20px;top:582px;font-size:9px;line-height:11px;color:#6A6A6A;white-space:nowrap;">12</div>
<div class="a" style="left:36px;top:583px;width:96px;height:50px;background:#fff;box-shadow:0 0 1px rgba(0,0,0,.25)"></div>
<div class="a" style="left:35px;top:515.5px;width:98px;height:57px;border:2px solid #D5603C;z-index:3"></div>
<svg class="a" style="left:38.89px;top:252.96px" width="22.36" height="22.36" viewBox="228 260 160 160"><use href="#logo"/></svg>
<div class="a" style="left:70px;top:256px;width:50px;height:2px;background:#F0A8A0"></div>
<div class="a" style="left:59px;top:270px;width:73px;height:31px;background:#3A3A3C"></div>
<div class="a" style="left:60px;top:271px;width:23px;height:14px;background:radial-gradient(ellipse 4px 5px at 50% 45%,#2A2A2A 0 80%,transparent 100%),radial-gradient(ellipse 7px 5px at 50% 100%,#3A3A3A 0 80%,transparent 100%),#B8BCC4"></div>
<div class="a" style="left:84px;top:271px;width:23px;height:14px;background:radial-gradient(ellipse 4px 5px at 50% 45%,#B89888 0 80%,transparent 100%),radial-gradient(ellipse 7px 5px at 50% 100%,#3A3A3A 0 80%,transparent 100%),#E8E4E0"></div>
<div class="a" style="left:108px;top:271px;width:23px;height:14px;background:radial-gradient(ellipse 4px 5px at 50% 45%,#A89080 0 80%,transparent 100%),radial-gradient(ellipse 7px 5px at 50% 100%,#3A3A3A 0 80%,transparent 100%),#D8D0C8"></div>
<div class="a" style="left:60px;top:286px;width:23px;height:14px;background:radial-gradient(ellipse 4px 5px at 50% 45%,#5A4A40 0 80%,transparent 100%),radial-gradient(ellipse 7px 5px at 50% 100%,#3A3A3A 0 80%,transparent 100%),#D8D8D8"></div>
<div class="a" style="left:84px;top:286px;width:23px;height:14px;background:radial-gradient(ellipse 4px 5px at 50% 45%,#8A6A5A 0 80%,transparent 100%),radial-gradient(ellipse 7px 5px at 50% 100%,#3A3A3A 0 80%,transparent 100%),#E0DCD8"></div>
<div class="a" style="left:108px;top:286px;width:23px;height:14px;background:radial-gradient(ellipse 4px 5px at 50% 45%,#B8A8A0 0 80%,transparent 100%),radial-gradient(ellipse 7px 5px at 50% 100%,#3A3A3A 0 80%,transparent 100%),#C8C8D0"></div>
<div class="a" style="left:62px;top:259px;width:65px;height:7px;background:repeating-linear-gradient(#CFCFCF 0 1px,transparent 1px 2.5px)"></div>
<svg class="a" style="left:38.89px;top:319.96px" width="22.36" height="22.36" viewBox="228 260 160 160"><use href="#logo"/></svg>
<div class="a" style="left:80px;top:322px;width:30px;height:2px;background:#F0A8A0"></div>
<div class="a" style="left:63px;top:330px;width:10px;height:1.5px;background:#444"></div>
<div class="a" style="left:75px;top:330px;width:50px;height:4px;background:repeating-linear-gradient(#DADADA 0 1px,transparent 1px 2px)"></div>
<div class="a" style="left:63px;top:337px;width:10px;height:1.5px;background:#444"></div>
<div class="a" style="left:75px;top:337px;width:50px;height:4px;background:repeating-linear-gradient(#DADADA 0 1px,transparent 1px 2px)"></div>
<div class="a" style="left:63px;top:342.5px;width:10px;height:1.5px;background:#444"></div>
<div class="a" style="left:75px;top:342.5px;width:50px;height:4px;background:repeating-linear-gradient(#DADADA 0 1px,transparent 1px 2px)"></div>
<div class="a" style="left:63px;top:347.5px;width:10px;height:1.5px;background:#444"></div>
<div class="a" style="left:75px;top:347.5px;width:50px;height:4px;background:repeating-linear-gradient(#DADADA 0 1px,transparent 1px 2px)"></div>
<div class="a" style="left:63px;top:352.5px;width:10px;height:1.5px;background:#444"></div>
<div class="a" style="left:75px;top:352.5px;width:50px;height:4px;background:repeating-linear-gradient(#DADADA 0 1px,transparent 1px 2px)"></div>
<div class="a" style="left:63px;top:357.5px;width:10px;height:1.5px;background:#444"></div>
<div class="a" style="left:75px;top:357.5px;width:50px;height:4px;background:repeating-linear-gradient(#DADADA 0 1px,transparent 1px 2px)"></div>
<div class="a" style="left:36px;top:384.5px;width:96px;height:54px;background:linear-gradient(#fff 0 70%,#F8F0A0 85%,#E8E040);border:1.5px solid #4AA0D8"></div>
<div class="a" style="left:84px;top:386px;width:1px;height:40px;background:#6AB0E0"></div>
<div class="a" style="left:40px;top:398px;width:40px;height:28px;background:repeating-linear-gradient(#B8C0D0 0 1px,transparent 1px 3px)"></div>
<div class="a" style="left:88px;top:396px;width:40px;height:30px;background:repeating-linear-gradient(#B8C0D0 0 1px,transparent 1px 3px)"></div>
<svg class="a" style="left:38.89px;top:450.96px" width="22.36" height="22.36" viewBox="228 260 160 160"><use href="#logo"/></svg>
<div class="a" style="left:72px;top:453px;width:26px;height:2px;background:#F0A8A0"></div>
<div class="a" style="left:62px;top:466px;width:52px;height:30px;background:repeating-linear-gradient(#DCDCDC 0 1px,transparent 1px 3px)"></div>
<div class="a" style="left:0;top:0;width:1366px;height:768px;transform-origin:0 0;transform:translate(36px,517px) scale(0.14436) translate(-213px,-250.5px)">

<div class="a" style="left:213px;top:250.5px;width:665px;height:374.5px;background:#FDFDFD"></div>
<svg class="a" style="left:228px;top:260px" width="160" height="160" viewBox="228 260 160 160">
<circle cx="307.5" cy="339" r="78.7" fill="#EC2A22"/>
<path d="M281 280.5H335.5L327 313L360 306.7V360.5L327 355L335.5 386H281L289 355L255 360.5V306.7L289 313Z" fill="#fff" stroke="#3A2A2A" stroke-width="0.9" stroke-linejoin="miter"/>
<text x="306.5" y="296.5" text-anchor="middle" font-family="Liberation Serif" font-weight="bold" font-size="14.5" fill="#111">Ш</text>
<text x="265.5" y="339.5" text-anchor="middle" font-family="Liberation Serif" font-weight="bold" font-size="14.5" fill="#111">М</text>
<text x="349.5" y="339.5" text-anchor="middle" font-family="Liberation Serif" font-weight="bold" font-size="14.5" fill="#111">В</text>
<path d="M290 330C289 345 292 358 302 362C309 364 314 358 317 350L314 330C311 323 304 320 298 321C294 322 291 325 290 330Z" fill="#fff" stroke="#111" stroke-width="1.2"/>
<path d="M289 326C288 312 296 301 306 299C303 303 305 307 310 306C320 305 329 314 329 326C329 334 327 340 325 345C328 349 328 353 325 355C322 352 319 350 317 351L313 331C310 324 304 320 297 321C293 322 290 324 289 326Z" fill="#111"/>
<path d="M308 304C312 300 316 302 314 306" fill="none" stroke="#fff" stroke-width=".8"/>
<path d="M294 336L302 334" stroke="#111" stroke-width="1.4"/>
<path d="M300 340L302 346L299 347" fill="none" stroke="#111" stroke-width=".8"/>
<path d="M289 354C293 349 299 348 303 351C307 348 313 348 317 352C319 356 318 359 316 358C313 354 308 354 304 355C300 354 295 355 292 359C290 359 288 357 289 354Z" fill="#111"/>
<path d="M290 366L324 384M324 366L290 384" stroke="#222" stroke-width="2.2"/>
<path d="M290 366L324 384" stroke="#fff" stroke-width="0.8"/>
<circle cx="319" cy="369" r="4" fill="#fff" stroke="#222" stroke-width="1.3"/>
<text x="307.5" y="406" text-anchor="middle" font-family="Liberation Serif" font-weight="bold" font-size="18.5" fill="#111" letter-spacing="0.3">ДЖУРА</text>
</svg>
<div class="a" style="left:460px;top:273px;font-family:'Liberation Serif',serif;font-weight:bold;font-size:20.5px;line-height:24px;color:#E0241C;letter-spacing:4.3px;white-space:nowrap">ГРУДЕНЬ</div>
<div class="a" style="left:611px;top:273.5px;font-family:'Liberation Serif',serif;font-weight:bold;font-size:19.5px;line-height:24px;color:#E0241C;white-space:nowrap">2022 року</div>
<div class="a" style="left:234px;top:462px;font-family:'Liberation Serif',serif;font-weight:bold;font-size:19.2px;line-height:23.5px;color:#111;white-space:nowrap;z-index:2">Створення<br>Telegram - каналу</div>
<div class="a" style="left:394px;top:300px;font-size:5.5px;line-height:8px;color:#333;white-space:nowrap;font-weight:bold">ДЖУРА: Северодонецька міська територіальна громада</div>
<div class="a" style="left:394px;top:309px;font-size:5.5px;line-height:7.5px;color:#B8B8B8;white-space:nowrap;">24 подписчика</div>
<div class="a" style="left:387px;top:320px;width:184px;height:293px;background:linear-gradient(180deg,#B4BAC2 0,#C4CAD0 30%,#D2D6DB 60%,#DCE0E4 100%)"></div>
<div class="a" style="left:387px;top:320px;width:184px;height:293px;background:linear-gradient(90deg,rgba(110,118,128,.45) 0,rgba(150,156,164,.2) 12%,transparent 30%,transparent 75%,rgba(160,166,174,.25) 100%)"></div>
<div class="a" style="left:387px;top:320px;width:184px;height:293px;background:radial-gradient(ellipse 40px 60px at 90% 55%,rgba(140,148,158,.35),transparent),radial-gradient(ellipse 30px 40px at 8% 50%,rgba(90,98,108,.35),transparent)"></div>
<div class="a" style="left:482.5px;top:324px;width:38.0px;height:10.5px;border-radius:5px;background:rgba(120,130,140,.55);color:#fff;font-size:5.6px;line-height:10.5px;text-align:center;white-space:nowrap">20 декабря</div>
<div class="a" style="left:479.5px;top:339.5px;width:45.5px;height:10.0px;border-radius:5px;background:rgba(120,130,140,.55);color:#fff;font-size:5.6px;line-height:10.0px;text-align:center;white-space:nowrap">Канал создан</div>
<div class="a" style="left:455px;top:355px;width:95px;height:10px;border-radius:5px;background:rgba(120,130,140,.55);color:#fff;font-size:5.6px;line-height:10px;text-align:center;white-space:nowrap">Фотография канала обновлена</div>
<svg class="a" style="left:480.79px;top:368.92px" width="42.69" height="42.69" viewBox="228 260 160 160"><use href="#logo"/></svg>
<div class="a" style="left:395px;top:416px;width:141px;height:12px;background:rgba(255,255,255,.92);border-radius:5px 5px 0 0"></div>
<div class="a" style="left:399px;top:418px;font-size:5.8px;line-height:7.8px;color:#3A7EC0;white-space:nowrap;">ДЖУРА: Северодонецька міська територіальн...</div>
<div class="a" style="left:397px;top:427px;width:138px;height:180px;background:linear-gradient(90deg,#E4E4E0,#F2F1EC 10%,#F4F3EF 85%,#E0DFDA);box-shadow:0 1px 2px rgba(0,0,0,.35)"></div>
<div class="a" style="left:410.5px;top:431px;font-size:9.2px;line-height:11px;color:#333;white-space:nowrap;font-family:'Liberation Serif',serif">Свята підходить до порогу...</div>
<div class="a" style="left:406px;top:440.5px;font-size:9.2px;line-height:11px;color:#333;white-space:nowrap;font-family:'Liberation Serif',serif">Таємно вірю в чудеса.</div>
<svg class="a" style="left:413px;top:455px" width="100" height="112" viewBox="0 0 100 112">
<path d="M6 6C22 1 42 9 62 4C76 1 86 6 94 3C90 20 97 40 93 60C97 80 92 94 96 106C74 111 44 102 12 108C8 92 3 72 8 52C4 32 9 18 6 6Z" fill="#EEE8D8" stroke="#B8AE90" stroke-width="1.2"/>
<path d="M13 14C30 10 50 16 86 11C84 40 88 70 84 94C60 98 34 92 14 96C16 70 10 40 13 14Z" fill="#A8CCE4"/>
<path d="M16 50C16 30 26 22 36 26C44 30 44 44 42 56Z" fill="#6A3A22"/>
<path d="M24 38C24 31 32 29 36 34C38 41 35 48 30 49C26 48 24 44 24 38Z" fill="#F4D2BA"/>
<path d="M20 28C24 22 34 20 40 26" fill="none" stroke="#C8302A" stroke-width="2"/>
<path d="M52 32C56 20 72 18 80 28C86 38 84 56 86 74L62 74C54 58 48 44 52 32Z" fill="#6A3220"/>
<path d="M58 36C60 29 70 29 72 36C74 44 70 50 65 51C60 50 57 44 58 36Z" fill="#F4D2BA"/>
<path d="M54 26C60 20 72 20 78 26" fill="none" stroke="#D03A2A" stroke-width="2.2"/>
<path d="M14 62C20 50 32 50 42 58L40 96H14Z" fill="#F0EEEA"/>
<path d="M16 66L24 62L30 70L20 76ZM18 84L28 80L32 90H18Z" fill="#C8302A"/>
<path d="M58 56C70 50 82 56 86 64V94H58Z" fill="#EEEEF2"/>
<path d="M64 60L84 70M66 70L86 80M62 82L84 90" stroke="#4A5A8A" stroke-width="2.2"/>
<path d="M30 62H68L62 54H36Z" fill="#C8A040"/>
<rect x="30" y="62" width="38" height="30" fill="#B82A1A"/>
<rect x="36" y="68" width="26" height="18" fill="#3A5A4A"/>
<circle cx="44" cy="78" r="3" fill="#E8D8A0"/><circle cx="54" cy="78" r="3" fill="#D8C890"/>
<path d="M2 84C10 78 20 84 24 96C18 108 6 104 2 94Z" fill="#3A6A3A"/>
<path d="M70 2C80 6 94 10 98 24C90 28 78 20 70 10Z" fill="#4A7A3A"/>
<circle cx="80" cy="12" r="1.5" fill="#fff"/><circle cx="86" cy="16" r="1.5" fill="#fff"/><circle cx="14" cy="92" r="1.5" fill="#E83A2A"/><circle cx="10" cy="88" r="1.2" fill="#fff"/>
</svg>
<div class="a" style="left:457px;top:567px;font-size:9.2px;line-height:11px;color:#333;white-space:nowrap;font-family:'Liberation Serif',serif">Хай наша віра</div>
<div class="a" style="left:440px;top:576px;font-size:4px;line-height:6px;color:#555;white-space:nowrap;font-family:'Liberation Serif',serif"><span style="font-size:4px;vertical-align:top">в. Михайло при Вірюк</span></div>
<div class="a" style="left:444.5px;top:576.5px;font-size:9.2px;line-height:11px;color:#333;white-space:nowrap;font-family:'Liberation Serif',serif">в перемогу</div>
<div class="a" style="left:416px;top:585.5px;font-size:9.2px;line-height:11px;color:#333;white-space:nowrap;font-family:'Liberation Serif',serif">Летить до Бога в небеса!</div>
<div class="a" style="left:472px;top:597px;font-size:4.2px;line-height:6.2px;color:#555;white-space:nowrap;font-family:'Liberation Serif',serif">Ірина Плющ</div>
<div class="a" style="left:542.5px;top:595px;width:12px;height:12px;border-radius:50%;background:#9AA0A8"></div>
<svg class="a" style="left:544.5px;top:597px" width="8" height="8" viewBox="0 0 8 8"><path d="M1 6C1.5 3.5 3.5 2.5 5 2.5V1L7.5 3.5L5 6V4.5C3.5 4.5 2 5 1 6Z" fill="#fff"/></svg>
<div class="a" style="left:606px;top:302px;width:193px;height:307px;background:#FCFCFC;border-left:1.2px solid #555;border-top:2px solid #666"></div>
<div class="a" style="left:618.5px;top:313.5px;font-size:8.1px;line-height:10px;color:#444;white-space:nowrap;font-weight:bold">Информация о канале</div>
<svg class="a" style="left:763px;top:313px" width="4" height="10" viewBox="0 0 4 10"><circle cx="2" cy="1.5" r=".8" fill="#888"/><circle cx="2" cy="5" r=".8" fill="#888"/><circle cx="2" cy="8.5" r=".8" fill="#888"/></svg>
<svg class="a" style="left:780px;top:314px" width="9" height="9" viewBox="0 0 9 9"><path d="M1 1L8 8M8 1L1 8" stroke="#999" stroke-width="1"/></svg>
<svg class="a" style="left:616.0px;top:340.0px" width="35.0" height="35.0" viewBox="0 0 40 40"><circle cx="20" cy="20" r="19.5" fill="#E8231F"/><path d="M14 6H26L23 14L34 11V25L23 22L26 31H14L17 22L6 25V11L17 14Z" fill="#fff" stroke="#333" stroke-width=".5"/><path d="M17 12C19 10 23 11 23 14C24 17 23 21 21 23C19 23 17 21 17 18Z" fill="#1A1A1A"/><path d="M13 32H27" stroke="#111" stroke-width="2.5"/></svg>
<div class="a" style="left:660px;top:348px;font-size:7.8px;line-height:10px;color:#333;white-space:nowrap;font-weight:bold">ДЖУРА: Сєвєродонецька міськ...</div>
<div class="a" style="left:660px;top:360px;font-size:5.8px;line-height:7.8px;color:#B0B0B0;white-space:nowrap;">24 подписчика</div>
<div class="a" style="left:607px;top:386px;width:192px;height:4px;background:#EFEFEF"></div>
<div class="a" style="left:607px;top:475px;width:192px;height:4px;background:#EFEFEF"></div>
<div class="a" style="left:607px;top:546px;width:192px;height:4px;background:#EFEFEF"></div>
<div class="a" style="left:607px;top:577px;width:192px;height:4px;background:#EFEFEF"></div>
<svg class="a" style="left:618px;top:398px" width="12" height="12" viewBox="0 0 12 12"><circle cx="6" cy="6" r="5" fill="none" stroke="#777" stroke-width="1"/><path d="M6 5V9M6 3V4" stroke="#777" stroke-width="1"/></svg>
<div class="a" style="left:646px;top:397.5px;font-size:6.5px;line-height:8.3px;color:#4A90C8;white-space:nowrap;">t.me/DzhuraSever</div>
<div class="a" style="left:646px;top:407px;font-size:5.8px;line-height:7.8px;color:#B8B8B8;white-space:nowrap;">Ссылка</div>
<svg class="a" style="left:619px;top:432px" width="10" height="12" viewBox="0 0 10 12"><path d="M5 1.5C3 1.5 2 3 2 5V8L1 9.5H9L8 8V5C8 3 7 1.5 5 1.5ZM4 10.5H6" fill="none" stroke="#777" stroke-width="1"/></svg>
<div class="a" style="left:646px;top:434px;font-size:6.3px;line-height:8.3px;color:#555;white-space:nowrap;">Уведомления</div>
<div class="a" style="left:773px;top:435px;width:15px;height:6px;border-radius:3px;background:#BDBDBD"></div><div class="a" style="left:772px;top:434px;width:8px;height:8px;border-radius:50%;background:#fff;border:1px solid #999"></div>
<div class="a" style="left:646px;top:456px;font-size:6.2px;line-height:8.2px;color:#3A8AC8;white-space:nowrap;">ОТКРЫТЬ КАНАЛ</div>
<svg class="a" style="left:618px;top:488px" width="11" height="11" viewBox="0 0 11 11"><rect x="1" y="1" width="9" height="9" rx="1" fill="none" stroke="#777" stroke-width="1"/><path d="M1.5 7.5L4 5L6 7L8 5.5L10 7.5" fill="none" stroke="#777" stroke-width=".9"/></svg>
<div class="a" style="left:646px;top:489px;font-size:6.3px;line-height:8.3px;color:#555;white-space:nowrap;">8 фотографий</div>
<svg class="a" style="left:618px;top:507px" width="12" height="10" viewBox="0 0 12 10"><rect x="1" y="1.5" width="7" height="7" rx="1.5" fill="none" stroke="#777" stroke-width="1"/><path d="M8 4L11 2.5V7.5L8 6" fill="none" stroke="#777" stroke-width="1"/></svg>
<div class="a" style="left:646px;top:507.5px;font-size:6.3px;line-height:8.3px;color:#555;white-space:nowrap;">1 видео</div>
<svg class="a" style="left:617px;top:526px" width="13" height="9" viewBox="0 0 13 9"><path d="M5 1.5H3.5A3 3 0 0 0 3.5 7.5H5M8 1.5H9.5A3 3 0 0 1 9.5 7.5H8M4 4.5H9" fill="none" stroke="#777" stroke-width="1"/></svg>
<div class="a" style="left:646px;top:525.5px;font-size:6.3px;line-height:8.3px;color:#555;white-space:nowrap;">3 ссылок</div>
<svg class="a" style="left:617px;top:557px" width="13" height="11" viewBox="0 0 13 11"><circle cx="5" cy="3.5" r="2.5" fill="none" stroke="#777" stroke-width="1"/><path d="M1 10C1 7.5 3 6.5 5 6.5S9 7.5 9 10M9 1.5A2.3 2.3 0 0 1 9 6M10.5 7C11.5 7.5 12 8.5 12 10" fill="none" stroke="#777" stroke-width="1"/></svg>
<div class="a" style="left:646px;top:558px;font-size:6.3px;line-height:8.3px;color:#555;white-space:nowrap;">24 подписчика</div>
<svg class="a" style="left:776px;top:556px" width="13" height="12" viewBox="0 0 13 12"><circle cx="8" cy="4" r="2.5" fill="none" stroke="#777" stroke-width="1"/><path d="M4 11C4 8.5 6 7.5 8 7.5S12 8.5 12 11M0.5 5.5H4M2.25 3.75V7.25" fill="none" stroke="#777" stroke-width="1"/></svg>
<svg class="a" style="left:618px;top:588px" width="12" height="11" viewBox="0 0 12 11"><path d="M5 1H1.5V10H5M4 5.5H11M8.5 3L11 5.5L8.5 8" fill="none" stroke="#777" stroke-width="1"/></svg>
<div class="a" style="left:646px;top:588.5px;font-size:6.3px;line-height:8.3px;color:#555;white-space:nowrap;">Покинуть канал</div>
</div>
<svg class="a" style="left:39.93px;top:588.97px" width="14.23" height="14.23" viewBox="228 260 160 160"><use href="#logo"/></svg>
<div class="a" style="left:75px;top:586px;width:30px;height:2px;background:#F08880"></div>
<div class="a" style="left:60px;top:604px;width:10px;height:24px;background:repeating-linear-gradient(#2A2A2A 0 5px,transparent 5px 8px)"></div>
<div class="a" style="left:72px;top:604px;width:50px;height:24px;background:repeating-linear-gradient(#DDD 0 3px,transparent 3px 8px)"></div>
<div class="a" style="left:145px;top:244px;width:9px;height:389px;background:#DDDDDD"></div>
<div class="a" style="left:145px;top:313px;width:9px;height:56px;background:#FAFAFA;border:1px solid #D8D8D8"></div>
<div class="a" style="left:145px;top:244px;width:9px;height:11px;background:#FAFAFA"></div>
<svg class="a" style="left:146px;top:247px" width="7" height="5" viewBox="0 0 7 5"><path d="M0.5 4.5L3.5 1L6.5 4.5Z" fill="#666"/></svg>
<div class="a" style="left:145px;top:622px;width:9px;height:11px;background:#FAFAFA"></div>
<svg class="a" style="left:146px;top:626px" width="7" height="5" viewBox="0 0 7 5"><path d="M0.5 0.5L3.5 4L6.5 0.5Z" fill="#666"/></svg>
<div class="a" style="left:154px;top:244px;width:1px;height:389px;background:#EFEFEF"></div>
<div class="a" style="left:935px;top:244px;width:9px;height:389px;background:#E7E7E7"></div>
<div class="a" style="left:936px;top:342px;width:8px;height:10px;background:#FFF;border:1px solid #C8C8C8"></div>
<div class="a" style="left:935px;top:244px;width:9px;height:11px;background:#FAFAFA"></div>
<svg class="a" style="left:936px;top:247px" width="7" height="5" viewBox="0 0 7 5"><path d="M0.5 4.5L3.5 1L6.5 4.5Z" fill="#666"/></svg>
<div class="a" style="left:935px;top:589px;width:9px;height:12px;background:#FAFAFA"></div>
<svg class="a" style="left:936px;top:593px" width="7" height="5" viewBox="0 0 7 5"><path d="M0.5 0.5L3.5 4L6.5 0.5Z" fill="#666"/></svg>
<svg class="a" style="left:936px;top:602px" width="7" height="8" viewBox="0 0 7 8"><path d="M0.5 4L3.5 1L6.5 4M0.5 7L3.5 4L6.5 7" fill="none" stroke="#777" stroke-width="1"/></svg>
<svg class="a" style="left:936px;top:612px" width="7" height="8" viewBox="0 0 7 8"><path d="M0.5 1L3.5 4L6.5 1M0.5 4L3.5 7L6.5 4" fill="none" stroke="#777" stroke-width="1"/></svg>
<div class="a" style="left:20px;top:637px;font-size:7px;line-height:9px;color:#555;white-space:nowrap;">Слайд 11 из 33</div>
<svg class="a" style="left:74px;top:636px" width="10" height="9" viewBox="0 0 10 9"><rect x="0.5" y="0.5" width="7" height="7" fill="none" stroke="#666" stroke-width=".8"/><path d="M4 5L6 7L9.5 2" fill="none" stroke="#666" stroke-width=".9"/></svg>
<div class="a" style="left:93px;top:637px;font-size:7px;line-height:9px;color:#555;white-space:nowrap;">русский</div>
<svg class="a" style="left:624px;top:637px" width="8" height="7" viewBox="0 0 8 7"><path d="M1 5L4 2L7 5M1 6.5H7" fill="none" stroke="#555" stroke-width=".9"/></svg>
<div class="a" style="left:633px;top:637px;font-size:7px;line-height:9px;color:#444;white-space:nowrap;">Заметки</div>
<svg class="a" style="left:669px;top:636px" width="9" height="8" viewBox="0 0 9 8"><path d="M0.5 0.5H8.5V5.5H3L1 7.5V5.5H0.5Z" fill="#555"/></svg>
<div class="a" style="left:679px;top:637px;font-size:7px;line-height:9px;color:#444;white-space:nowrap;">Примечания</div>
<div class="a" style="left:728px;top:634px;width:23px;height:13px;background:#D6D6D6"></div>
<svg class="a" style="left:735px;top:636px" width="11" height="9" viewBox="0 0 11 9"><rect x=".5" y=".5" width="10" height="8" fill="none" stroke="#8A8A8A"/><path d="M3.5 .5V8.5M3.5 4.5H10.5" stroke="#8A8A8A"/></svg>
<svg class="a" style="left:759px;top:636px" width="11" height="9" viewBox="0 0 11 9"><path d="M.5 .5H10.5V8.5H.5ZM3.8 .5V8.5M7.2 .5V8.5M.5 4.5H10.5" fill="none" stroke="#9A9A9A"/></svg>
<svg class="a" style="left:783px;top:636px" width="11" height="9" viewBox="0 0 11 9"><path d="M.5 .5H5V8.5H.5ZM6 .5H10.5V8.5H6Z" fill="none" stroke="#9A9A9A"/></svg>
<svg class="a" style="left:807px;top:636px" width="11" height="10" viewBox="0 0 11 10"><path d="M.5 .5H10.5M1.5 .5V6.5H9.5V.5M5.5 6.5V9.5M3 9.5H8" fill="none" stroke="#9A9A9A"/></svg>
<div class="a" style="left:829px;top:640px;width:4px;height:1px;background:#777"></div>
<div class="a" style="left:836px;top:640px;width:62px;height:1px;background:#C4C4C4"></div>
<div class="a" style="left:860px;top:636px;width:3px;height:9px;background:#6A6A6A"></div>
<svg class="a" style="left:899px;top:637px" width="6" height="6" viewBox="0 0 6 6"><path d="M3 0V6M0 3H6" stroke="#777" stroke-width=".8"/></svg>
<div class="a" style="left:911px;top:637px;font-size:7px;line-height:9px;color:#555;white-space:nowrap;">86 %</div>
<svg class="a" style="left:932px;top:636px" width="9" height="9" viewBox="0 0 9 9"><rect x="0.5" y="0.5" width="8" height="8" fill="none" stroke="#777" stroke-width=".8"/><path d="M2 2L7 7M7 2L2 7" stroke="#777" stroke-width=".6"/></svg>
<!-- RIBBON -->
<svg class="a" style="left:24px;top:192px" width="20" height="18" viewBox="0 0 20 18"><path d="M1 1.5H17" stroke="#7A7A7A" stroke-width="1.6"/><rect x="2.5" y="2.5" width="13" height="9" fill="#fff" stroke="#8A8A8A" stroke-width="1"/><path d="M4.5 5H10M4.5 7H9" stroke="#B8B8B8" stroke-width="1"/><path d="M9 11.5V15M5 16.5H13" stroke="#7A7A7A" stroke-width="1.4"/><circle cx="15" cy="8" r="4.2" fill="#fff" stroke="#666" stroke-width="1"/><path d="M13.8 6V10L16.8 8Z" fill="#555"/></svg>
<div class="a" style="left:-27px;top:213px;width:120px;text-align:center;font-size:7.6px;line-height:9.6px;color:#505050;white-space:nowrap;">С</div>
<div class="a" style="left:-27px;top:222.5px;width:120px;text-align:center;font-size:7.6px;line-height:9.6px;color:#505050;white-space:nowrap;">начала</div>
<svg class="a" style="left:56px;top:192px" width="20" height="18" viewBox="0 0 20 18"><path d="M1 1.5H17" stroke="#7A7A7A" stroke-width="1.6"/><rect x="2.5" y="2.5" width="13" height="9" fill="#fff" stroke="#8A8A8A" stroke-width="1"/><path d="M4.5 5H10M4.5 7H9" stroke="#B8B8B8" stroke-width="1"/><path d="M9 11.5V15M5 16.5H13" stroke="#7A7A7A" stroke-width="1.4"/><circle cx="8" cy="7" r="2.8" fill="#444"/></svg>
<div class="a" style="left:5px;top:213px;width:120px;text-align:center;font-size:7.6px;line-height:9.6px;color:#505050;white-space:nowrap;">С текущего</div>
<div class="a" style="left:5px;top:222.5px;width:120px;text-align:center;font-size:7.6px;line-height:9.6px;color:#505050;white-space:nowrap;">слайда</div>
<svg class="a" style="left:107px;top:192px" width="20" height="18" viewBox="0 0 20 18"><path d="M1 1.5H17" stroke="#7A7A7A" stroke-width="1.6"/><rect x="2.5" y="2.5" width="13" height="9" fill="#fff" stroke="#8A8A8A" stroke-width="1"/><path d="M4.5 5H10M4.5 7H9" stroke="#B8B8B8" stroke-width="1"/><path d="M9 11.5V15M5 16.5H13" stroke="#7A7A7A" stroke-width="1.4"/><circle cx="15" cy="10" r="4.5" fill="#fff" stroke="#4A78B8" stroke-width="1"/><path d="M10.5 10H19.5M15 5.5V14.5M12 7.5Q15 9 18 7.5M12 12.5Q15 11 18 12.5" fill="none" stroke="#4A78B8" stroke-width=".7"/></svg>
<div class="a" style="left:56px;top:213px;width:120px;text-align:center;font-size:7.6px;line-height:9.6px;color:#505050;white-space:nowrap;">Онлайн-</div>
<div class="a" style="left:56.5px;top:222.5px;width:120px;text-align:center;font-size:7.6px;line-height:9.6px;color:#505050;white-space:nowrap;">презентация <span style="font-size:5px;vertical-align:1px">▾</span></div>
<svg class="a" style="left:158px;top:192px" width="20" height="18" viewBox="0 0 20 18"><rect x="1" y="1" width="5" height="3" fill="#5A7AA8"/><rect x="1" y="6" width="5" height="3" fill="#5A7AA8"/><rect x="1" y="11" width="5" height="3" fill="#9AB0CC"/><path d="M7 3.5H19" stroke="#7A7A7A" stroke-width="1.4"/><rect x="8" y="4.5" width="10" height="7" fill="#fff" stroke="#8A8A8A" stroke-width="1"/><path d="M13 11.5V15M10 16.5H16" stroke="#7A7A7A" stroke-width="1.3"/></svg>
<div class="a" style="left:108px;top:213px;width:120px;text-align:center;font-size:7.6px;line-height:9.6px;color:#505050;white-space:nowrap;">Произвольное</div>
<div class="a" style="left:108px;top:222.5px;width:120px;text-align:center;font-size:7.6px;line-height:9.6px;color:#505050;white-space:nowrap;">слайд-шоу <span style="font-size:5px;vertical-align:1px">▾</span></div>
<div class="a" style="left:47px;top:234.5px;width:120px;text-align:center;font-size:7px;line-height:9px;color:#555;white-space:nowrap;">Начать слайд-шоу</div>
<div class="a" style="left:199px;top:192px;width:1px;height:48px;background:#DCDCDC"></div>
<svg class="a" style="left:213px;top:192px" width="20" height="18" viewBox="0 0 20 18"><path d="M4 0.5H9L11 2.5V6" fill="none" stroke="#8A8A8A" stroke-width=".8"/><path d="M1 4H18" stroke="#7A7A7A" stroke-width="1.4"/><rect x="2" y="5" width="15" height="7" fill="#fff" stroke="#8A8A8A" stroke-width="1"/><rect x="9" y="6.5" width="3" height="2.5" fill="#555"/><path d="M9.5 12V15.5M6 16.5H13" stroke="#7A7A7A" stroke-width="1.3"/></svg>
<div class="a" style="left:163px;top:213px;width:120px;text-align:center;font-size:7.6px;line-height:9.6px;color:#505050;white-space:nowrap;">Настройка</div>
<div class="a" style="left:163px;top:222.5px;width:120px;text-align:center;font-size:7.6px;line-height:9.6px;color:#505050;white-space:nowrap;">слайд-шоу</div>
<svg class="a" style="left:246px;top:193px" width="18" height="16" viewBox="0 0 18 16"><rect x="1" y="2" width="16" height="12" fill="#fff" stroke="#8A8A8A" stroke-width="1"/><path d="M1 14L17 2" stroke="#555" stroke-width="1.2"/><circle cx="11" cy="7" r="2.2" fill="#2A3A4A"/></svg>
<div class="a" style="left:195px;top:213px;width:120px;text-align:center;font-size:7.6px;line-height:9.6px;color:#505050;white-space:nowrap;">Скрыть</div>
<div class="a" style="left:195px;top:222.5px;width:120px;text-align:center;font-size:7.6px;line-height:9.6px;color:#505050;white-space:nowrap;">слайд</div>
<div class="a" style="left:271px;top:192px;width:1px;height:42px;background:#E4E4E4"></div>
<svg class="a" style="left:284px;top:192px" width="20" height="19" viewBox="0 0 20 19"><path d="M1 1H18" stroke="#8A8A8A" stroke-width="1"/><rect x="2" y="2" width="15" height="9" fill="#fff" stroke="#8A8A8A" stroke-width="1"/><circle cx="13" cy="13.5" r="4.2" fill="#fff" stroke="#666" stroke-width="1"/><path d="M13 11V13.5M11.5 8.5H14.5" stroke="#555" stroke-width="1"/></svg>
<div class="a" style="left:234px;top:213px;width:120px;text-align:center;font-size:7.6px;line-height:9.6px;color:#505050;white-space:nowrap;">Настройка</div>
<div class="a" style="left:234px;top:222.5px;width:120px;text-align:center;font-size:7.6px;line-height:9.6px;color:#505050;white-space:nowrap;">времени</div>
<svg class="a" style="left:323px;top:192px" width="20" height="19" viewBox="0 0 20 19"><path d="M1 1H18" stroke="#8A8A8A" stroke-width="1"/><rect x="2" y="2" width="15" height="10" fill="#fff" stroke="#8A8A8A" stroke-width="1"/><circle cx="15" cy="13" r="3.6" fill="#fff"/><circle cx="15" cy="13" r="2.6" fill="#E0603A"/></svg>
<div class="a" style="left:273.5px;top:213px;width:120px;text-align:center;font-size:7.6px;line-height:9.6px;color:#505050;white-space:nowrap;">Записать</div>
<div class="a" style="left:273.5px;top:222.5px;width:120px;text-align:center;font-size:7.6px;line-height:9.6px;color:#505050;white-space:nowrap;">слайд-шоу <span style="font-size:5px;vertical-align:1px">▾</span></div>
<div class="a" style="left:357px;top:193px;width:8px;height:8px;border:1px solid #888;background:#fff"></div>
<svg class="a" style="left:358px;top:194px" width="7" height="7" viewBox="0 0 7 7"><path d="M1 3.5L3 5.5L6.5 1" fill="none" stroke="#333" stroke-width="1"/></svg>
<div class="a" style="left:368px;top:192px;font-size:7.3px;line-height:9.6px;color:#505050;white-space:nowrap;">Воспроизвести закадровый текст</div>
<div class="a" style="left:357px;top:207px;width:8px;height:8px;border:1px solid #888;background:#fff"></div>
<svg class="a" style="left:358px;top:208px" width="7" height="7" viewBox="0 0 7 7"><path d="M1 3.5L3 5.5L6.5 1" fill="none" stroke="#333" stroke-width="1"/></svg>
<div class="a" style="left:368px;top:206px;font-size:7.3px;line-height:9.6px;color:#505050;white-space:nowrap;">Использовать время показа слайдов</div>
<div class="a" style="left:357px;top:221px;width:8px;height:8px;border:1px solid #888;background:#fff"></div>
<svg class="a" style="left:358px;top:222px" width="7" height="7" viewBox="0 0 7 7"><path d="M1 3.5L3 5.5L6.5 1" fill="none" stroke="#333" stroke-width="1"/></svg>
<div class="a" style="left:368px;top:220px;font-size:7.3px;line-height:9.6px;color:#505050;white-space:nowrap;">Показать элементы управления проигрывателем</div>
<div class="a" style="left:311px;top:234.5px;width:120px;text-align:center;font-size:7px;line-height:9px;color:#555;white-space:nowrap;">Настройка</div>
<div class="a" style="left:544px;top:192px;width:1px;height:48px;background:#DCDCDC"></div>
<svg class="a" style="left:551px;top:195px" width="11" height="10" viewBox="0 0 11 10"><rect x="0.5" y="0.5" width="8" height="6" fill="#5A8AC8"/><rect x="3" y="3" width="7.5" height="6" fill="#fff" stroke="#3A6AA8" stroke-width=".8"/></svg>
<div class="a" style="left:563px;top:196px;font-size:7.6px;line-height:9.6px;color:#505050;white-space:nowrap;">Монитор:</div>
<div class="a" style="left:598px;top:194px;width:91px;height:14px;background:#F7F7F7;border:1px solid #E4E4E4"></div>
<div class="a" style="left:600px;top:196px;font-size:7.6px;line-height:9.6px;color:#333;white-space:nowrap;">Автоматически</div>
<svg class="a" style="left:678px;top:198px" width="9" height="6" viewBox="0 0 9 6"><path d="M1 1L4.5 4.5L8 1" fill="none" stroke="#444" stroke-width="1"/></svg>
<div class="a" style="left:551px;top:216px;width:8px;height:8px;border:1px solid #888;background:#fff"></div>
<svg class="a" style="left:552px;top:217px" width="7" height="7" viewBox="0 0 7 7"><path d="M1 3.5L3 5.5L6.5 1" fill="none" stroke="#333" stroke-width="1"/></svg>
<div class="a" style="left:562px;top:215px;font-size:7.6px;line-height:9.6px;color:#505050;white-space:nowrap;">Режим докладчика</div>
<div class="a" style="left:559px;top:234.5px;width:120px;text-align:center;font-size:7px;line-height:9px;color:#555;white-space:nowrap;">Мониторы</div>
<div class="a" style="left:694px;top:192px;width:1px;height:48px;background:#DCDCDC"></div>
<svg class="a" style="left:932px;top:236px" width="9" height="6" viewBox="0 0 9 6"><path d="M1 5L4.5 1.5L8 5" fill="none" stroke="#555" stroke-width="1"/></svg>
</div>
</div>


<!-- TILES -->
<div class="a tile" style="left:961px;top:149px;width:189px"></div>
<div class="a tile" style="left:1162px;top:149px"></div>
<div class="a tile" style="left:961px;top:277px;width:189px"></div>
<div class="a tile" style="left:1162px;top:277px"></div>
<div class="a tile" style="left:961px;top:405px;width:189px"></div>
<div class="a tile" style="left:1162px;top:405px"></div>
<div class="a tile" style="left:961px;top:533px;width:189px"></div>
<div class="a tile" style="left:1162px;top:533px"></div>
<div class="a" style="left:961px;top:149px;width:189px;height:116px;border:3px solid #7EA6EC;border-radius:9px"></div>
<div class="a" style="left:1012.0px;top:163.0px;width:87.0px;height:87.0px;border-radius:50%;background:#55585C;"></div>
<svg class="a" style="left:1028px;top:179px" width="56" height="56" viewBox="0 0 56 56"><defs><clipPath id="cp1"><circle cx="28" cy="28" r="28"/></clipPath><filter id="fp1" x="-10%" y="-10%" width="120%" height="120%"><feGaussianBlur stdDeviation="1.3"/></filter></defs><g clip-path="url(#cp1)"><g filter="url(#fp1)"><rect x="-5" y="-5" width="66" height="66" fill="#7A8E6A"/><rect x="-5" y="-5" width="66" height="18" fill="#C8CCC4"/><ellipse cx="10" cy="30" rx="8" ry="14" fill="#5E7A50"/><path d="M8 44C6 30 10 12 28 9C44 8 52 20 50 36C50 44 48 48 46 50L10 52Z" fill="#A27A56"/><ellipse cx="30" cy="29" rx="12" ry="15" fill="#D9AE9A"/><path d="M22 27H27M33 27H38" stroke="#8A6A5A" stroke-width="1.2"/><path d="M26 37Q30 39 34 37" stroke="#B88070" stroke-width="1.2" fill="none"/><ellipse cx="32" cy="54" rx="20" ry="10" fill="#F2F2F0"/><path d="M0 48L18 46L22 60H0Z" fill="#2A3650"/><path d="M46 44L56 40V60H44Z" fill="#2A3650"/></g></g></svg>
<div class="a" style="left:1111.7px;top:160.7px;width:26.6px;height:26.6px;border-radius:50%;background:#1F6FE5;"></div>
<svg class="a" style="left:1115px;top:171px" width="20" height="6" viewBox="0 0 20 6"><circle cx="3" cy="3" r="2.3" fill="#fff"/><circle cx="10" cy="3" r="2.3" fill="#fff"/><circle cx="17" cy="3" r="2.3" fill="#fff"/></svg>
<div class="a" style="left:977px;top:236.0px;font-size:14px;font-weight:bold;line-height:16px;color:#fff;white-space:nowrap">Вікторія Гуржій</div>
<div class="a" style="left:1312px;top:161px;width:26px;height:26px;border-radius:50%;background:#2E3033"></div>
<svg class="a" style="left:1317px;top:166px" width="16" height="16" viewBox="0 0 16 16"><rect x="5.8" y="1.5" width="4.4" height="7.5" rx="2.2" fill="#fff"/><path d="M3.3 7.5A4.7 4.7 0 0 0 12.7 7.5M8 12.2V14.5" fill="none" stroke="#fff" stroke-width="1.5"/><path d="M2.5 2L13.5 13.5" stroke="#2E3033" stroke-width="2.6"/><path d="M2.5 2L13.5 13.5" stroke="#fff" stroke-width="1.3"/></svg>
<svg class="a" style="left:1228.5px;top:178px" width="56" height="56" viewBox="0 0 56 56"><defs><clipPath id="cp2"><circle cx="28" cy="28" r="28"/></clipPath><filter id="fp2" x="-10%" y="-10%" width="120%" height="120%"><feGaussianBlur stdDeviation="1.3"/></filter></defs><g clip-path="url(#cp2)"><g filter="url(#fp2)"><rect x="-5" y="-5" width="66" height="66" fill="#2A2426"/><path d="M6 40C2 20 12 4 28 4C44 4 54 18 50 40L44 44H12Z" fill="#1A1616"/><ellipse cx="28" cy="31" rx="11.5" ry="14" fill="#D8A8A0"/><path d="M16 22C20 16 36 16 40 22" fill="#1A1616"/><path d="M19 29H26M30 29H37M26 29H30" stroke="#9A8A86" stroke-width="1"/><path d="M24 38Q28 40 32 38" stroke="#B8706A" stroke-width="1.2" fill="none"/><path d="M4 56C8 46 18 44 28 46C38 44 48 46 52 56Z" fill="#2A5878"/><path d="M18 56L22 46H34L38 56Z" fill="#C8C8C8"/></g></g></svg>
<div class="a" style="left:1178.5px;top:236.0px;font-size:14px;font-weight:bold;line-height:16px;color:#fff;white-space:nowrap">Вікторія Куценко</div>
<div class="a" style="left:1112px;top:289.5px;width:26px;height:26px;border-radius:50%;background:#2E3033"></div>
<svg class="a" style="left:1117px;top:294.5px" width="16" height="16" viewBox="0 0 16 16"><rect x="5.8" y="1.5" width="4.4" height="7.5" rx="2.2" fill="#fff"/><path d="M3.3 7.5A4.7 4.7 0 0 0 12.7 7.5M8 12.2V14.5" fill="none" stroke="#fff" stroke-width="1.5"/><path d="M2.5 2L13.5 13.5" stroke="#2E3033" stroke-width="2.6"/><path d="M2.5 2L13.5 13.5" stroke="#fff" stroke-width="1.3"/></svg>
<svg class="a" style="left:1027.5px;top:306.5px" width="56" height="56" viewBox="0 0 56 56"><defs><clipPath id="lgc"><circle cx="28" cy="28" r="20.5"/></clipPath></defs>
<circle cx="28" cy="28" r="28" fill="#F4E61E"/><circle cx="28" cy="28" r="24" fill="none" stroke="#9A8A20" stroke-width="2.2" stroke-dasharray="1.2 .8" opacity=".55"/>
<circle cx="28" cy="28" r="20.5" fill="#FAFAFC"/>
<g clip-path="url(#lgc)">
<path d="M8 22Q28 4 48 22M10 30Q28 14 46 30M18 8Q28 30 30 44M34 8Q26 28 44 40M6 16H50" fill="none" stroke="#B8D8EC" stroke-width=".7"/>
<path d="M14 44L28 29L42 44Z" fill="#2A6AB8"/><path d="M26 44L28 38L30 44Z" fill="#fff"/>
<rect x="4" y="43" width="48" height="6" fill="#5AB040"/>
<circle cx="38" cy="33" r="4.5" fill="#F4D030"/>
<path d="M21 26L28 21M23 27L36 19" stroke="#E04040" stroke-width="1.1"/>
<path d="M12 26L20 25M16 21.5V29.5" stroke="#D82030" stroke-width="1.6"/>
</g></svg>
<div class="a" style="left:977px;top:364.0px;font-size:14px;font-weight:bold;line-height:16px;color:#fff;white-space:nowrap">Lug_OCDUTK</div>
<div class="a" style="left:1312px;top:289.5px;width:26px;height:26px;border-radius:50%;background:#2E3033"></div>
<svg class="a" style="left:1317px;top:294.5px" width="16" height="16" viewBox="0 0 16 16"><rect x="5.8" y="1.5" width="4.4" height="7.5" rx="2.2" fill="#fff"/><path d="M3.3 7.5A4.7 4.7 0 0 0 12.7 7.5M8 12.2V14.5" fill="none" stroke="#fff" stroke-width="1.5"/><path d="M2.5 2L13.5 13.5" stroke="#2E3033" stroke-width="2.6"/><path d="M2.5 2L13.5 13.5" stroke="#fff" stroke-width="1.3"/></svg>
<div class="a" style="left:1228px;top:306.5px;width:56px;height:56px;border-radius:50%;background:#C1420F;"></div>
<div class="a" style="left:1216px;top:319px;width:80px;text-align:center;font-size:29px;line-height:32px;color:#fff">О</div>
<div class="a" style="left:1178.5px;top:364.0px;font-size:14px;font-weight:bold;line-height:16px;color:#fff;white-space:nowrap">Олена Хмельницька</div>
<div class="a" style="left:1112px;top:416px;width:26px;height:26px;border-radius:50%;background:#2E3033"></div>
<svg class="a" style="left:1117px;top:421px" width="16" height="16" viewBox="0 0 16 16"><rect x="5.8" y="1.5" width="4.4" height="7.5" rx="2.2" fill="#fff"/><path d="M3.3 7.5A4.7 4.7 0 0 0 12.7 7.5M8 12.2V14.5" fill="none" stroke="#fff" stroke-width="1.5"/><path d="M2.5 2L13.5 13.5" stroke="#2E3033" stroke-width="2.6"/><path d="M2.5 2L13.5 13.5" stroke="#fff" stroke-width="1.3"/></svg>
<svg class="a" style="left:1027.5px;top:434.5px" width="56" height="56" viewBox="0 0 56 56"><defs><clipPath id="cp5"><circle cx="28" cy="28" r="28"/></clipPath><filter id="fp5" x="-10%" y="-10%" width="120%" height="120%"><feGaussianBlur stdDeviation="1.3"/></filter></defs><g clip-path="url(#cp5)"><g filter="url(#fp5)"><rect x="-5" y="-5" width="66" height="66" fill="#E8E8E4"/><rect x="44" y="-5" width="3" height="66" fill="#D8DCD0"/><rect x="47" y="-5" width="14" height="66" fill="#B87A5A"/><path d="M16 16C18 8 38 8 40 16Z" fill="#9A9A98"/><ellipse cx="28" cy="28" rx="11" ry="14" fill="#C8A090"/><path d="M21 25H26M30 25H35" stroke="#7A6A60" stroke-width="1.2"/><path d="M24 36H32" stroke="#9A7060" stroke-width="1"/><path d="M6 58C10 46 20 42 28 44C38 42 48 46 50 58Z" fill="#A4ACB8"/><path d="M22 44L28 52L32 44Z" fill="#3A3A3A"/></g></g></svg>
<div class="a" style="left:977px;top:492.0px;font-size:14px;font-weight:bold;line-height:16px;color:#fff;white-space:nowrap">Борис Губанов</div>
<div class="a" style="left:1312px;top:416px;width:26px;height:26px;border-radius:50%;background:#2E3033"></div>
<svg class="a" style="left:1317px;top:421px" width="16" height="16" viewBox="0 0 16 16"><rect x="5.8" y="1.5" width="4.4" height="7.5" rx="2.2" fill="#fff"/><path d="M3.3 7.5A4.7 4.7 0 0 0 12.7 7.5M8 12.2V14.5" fill="none" stroke="#fff" stroke-width="1.5"/><path d="M2.5 2L13.5 13.5" stroke="#2E3033" stroke-width="2.6"/><path d="M2.5 2L13.5 13.5" stroke="#fff" stroke-width="1.3"/></svg>
<div class="a" style="left:1228px;top:434.5px;width:56px;height:56px;border-radius:50%;background:#F05A22;"></div>
<div class="a" style="left:1216px;top:447px;width:80px;text-align:center;font-size:29px;line-height:32px;color:#fff">Л</div>
<div class="a" style="left:1178.5px;top:492.0px;font-size:14px;font-weight:bold;line-height:16px;color:#fff;white-space:nowrap">Лариса Борисова</div>
<svg class="a" style="left:1055.5px;top:555.5px" width="38" height="38" viewBox="0 0 56 56"><defs><clipPath id="cp7"><circle cx="28" cy="28" r="28"/></clipPath><filter id="fp7" x="-10%" y="-10%" width="120%" height="120%"><feGaussianBlur stdDeviation="1.3"/></filter></defs><g clip-path="url(#cp7)"><g filter="url(#fp7)"><rect x="-5" y="-5" width="66" height="66" fill="#6A8A38"/><circle cx="12" cy="14" r="10" fill="#A8B860"/><circle cx="46" cy="40" r="12" fill="#C8B850"/><circle cx="14" cy="44" r="10" fill="#4A6A28"/><ellipse cx="30" cy="30" rx="6" ry="10" fill="#5A7AB0"/><circle cx="30" cy="17" r="3.5" fill="#C89A80"/><circle cx="42" cy="12" r="6" fill="#E8E0A0"/></g></g></svg>
<div class="a" style="left:1020.5px;top:555.5px;width:38px;height:38px;border-radius:50%;background:#129EAF;box-shadow:0 0 0 0 #3C4043"></div>
<div class="a" style="left:1010px;top:564px;width:60px;text-align:center;font-size:19px;line-height:22px;color:#fff">Н</div>
<div class="a" style="left:965.5px;top:609.0px;width:180px;text-align:center;font-size:14px;font-weight:bold;line-height:16px;color:#fff;white-space:nowrap">Ще 24 особи</div>
<div class="a" style="left:1312px;top:544.5px;width:26px;height:26px;border-radius:50%;background:#2E3033"></div>
<svg class="a" style="left:1317px;top:549.5px" width="16" height="16" viewBox="0 0 16 16"><rect x="5.8" y="1.5" width="4.4" height="7.5" rx="2.2" fill="#fff"/><path d="M3.3 7.5A4.7 4.7 0 0 0 12.7 7.5M8 12.2V14.5" fill="none" stroke="#fff" stroke-width="1.5"/><path d="M2.5 2L13.5 13.5" stroke="#2E3033" stroke-width="2.6"/><path d="M2.5 2L13.5 13.5" stroke="#fff" stroke-width="1.3"/></svg>
<svg class="a" style="left:1228px;top:561.5px" width="56" height="56" viewBox="0 0 56 56"><defs><clipPath id="cp8"><circle cx="28" cy="28" r="28"/></clipPath><filter id="fp8" x="-10%" y="-10%" width="120%" height="120%"><feGaussianBlur stdDeviation="1.3"/></filter></defs><g clip-path="url(#cp8)"><g filter="url(#fp8)"><rect x="-5" y="-5" width="66" height="66" fill="#DAD6D2"/><rect x="-5" y="-5" width="20" height="66" fill="#8A6E66"/><rect x="40" y="-5" width="20" height="66" fill="#E8E6E4"/><path d="M12 44C8 26 14 8 28 8C42 8 48 26 46 44L40 48H16Z" fill="#3A2422"/><ellipse cx="29" cy="30" rx="11" ry="14" fill="#D8A090"/><path d="M22 27H27M31 27H36" stroke="#7A5046" stroke-width="1.2"/><path d="M25 38Q29 40 33 38" stroke="#C04040" stroke-width="1.5" fill="none"/><path d="M4 58C8 46 18 42 28 44C40 42 50 46 54 58Z" fill="#2FB39C"/></g></g></svg>
<div class="a" style="left:1178.5px;top:619.5px;font-size:14px;font-weight:bold;line-height:16px;color:#fff;white-space:nowrap">Олена Вертеленко</div>
<!-- BANNER -->
<div class="a" style="left:32px;top:102px;white-space:nowrap;font-size:15.5px;font-weight:bold;line-height:20px;color:#F1F3F4;transform:scaleX(.897);transform-origin:0 0">Деякі встановлені розширення можуть впливати на якість виклику</div>
<div class="a" style="left:1169px;top:103px;white-space:nowrap;font-size:14.5px;font-weight:bold;line-height:20px;color:#A3BFF2">Докладніше</div>
<div class="a" style="left:1278px;top:103px;white-space:nowrap;font-size:14.5px;font-weight:bold;line-height:20px;color:#A3BFF2">Закрити</div>
<!-- BOTTOM BAR -->
<div class="a" style="left:24px;top:678px;white-space:nowrap;font-size:15px;font-weight:bold;line-height:20px;color:#fff;transform:scaleX(.83);transform-origin:0 0">11:11</div>
<div class="a" style="left:67px;top:680px;width:1px;height:16px;background:#BDC1C6"></div>
<div class="a" style="left:80px;top:678px;white-space:nowrap;font-size:15px;font-weight:bold;line-height:20px;color:#fff;letter-spacing:1px">tfo-enan-yxz</div>
<div class="a" style="left:499px;top:668px;width:40px;height:40px;border-radius:50%;background:#EA4335"></div>
<svg class="a" style="left:509px;top:678px" width="20" height="20" viewBox="0 0 20 20"><rect x="7.5" y="2" width="5" height="9" rx="2.5" fill="#fff"/><path d="M4.5 9.5A5.5 5.5 0 0 0 15.5 9.5M10 15V18" fill="none" stroke="#fff" stroke-width="1.8"/><path d="M3.5 2.5L17 17" stroke="#EA4335" stroke-width="3.2"/><path d="M3.5 2.5L17 17" stroke="#fff" stroke-width="1.6"/></svg>
<div class="a" style="left:551px;top:668px;width:40px;height:40px;border-radius:50%;background:#EA4335"></div>
<svg class="a" style="left:561px;top:678px" width="20" height="20" viewBox="0 0 20 20"><path d="M2 4.5V16H14V4.5Z" fill="none" stroke="#fff" stroke-width="1.8"/><path d="M14 9L18.5 5.5V15L14 11.5Z" fill="#fff"/><path d="M2.5 3L16 17.5" stroke="#EA4335" stroke-width="3"/><path d="M2.5 3L16 17.5" stroke="#fff" stroke-width="1.6"/></svg>
<div class="a" style="left:603px;top:668px;width:40px;height:40px;border-radius:50%;background:#3C4043"></div>
<svg class="a" style="left:611px;top:676px" width="24" height="24" viewBox="0 0 24 24"><circle cx="12" cy="12" r="9.5" fill="none" stroke="#fff" stroke-width="2.2"/><circle cx="8.6" cy="9.6" r="1.4" fill="#fff"/><circle cx="15.4" cy="9.6" r="1.4" fill="#fff"/><path d="M6.8 13H17.2A5.2 5.2 0 0 1 6.8 13Z" fill="#fff"/></svg>
<div class="a" style="left:655px;top:668px;width:40px;height:40px;border-radius:50%;background:#3C4043"></div>
<svg class="a" style="left:663px;top:678px" width="24" height="20" viewBox="0 0 24 20"><rect x="1.5" y="2" width="21" height="16" fill="none" stroke="#fff" stroke-width="2.4"/><path d="M12 6L8 10H10.5V13H13.5V10H16Z" fill="#fff"/></svg>
<div class="a" style="left:707px;top:668px;width:40px;height:40px;border-radius:50%;background:#3C4043"></div>
<svg class="a" style="left:715px;top:675px" width="24" height="26" viewBox="0 0 24 26"><path d="M9 13V4.5A1.5 1.5 0 0 1 12 4.5V12M12 11V2.5A1.5 1.5 0 0 1 15 2.5V12M15 11V4A1.5 1.5 0 0 1 18 4V12M18 11V6.5A1.5 1.5 0 0 1 21 6.5V16C21 21 18 24 14 24C10.5 24 9 22 7 19L3 13.5C2.3 12.5 3.5 11 4.8 11.8L9 15" fill="none" stroke="#fff" stroke-width="1.8" stroke-linejoin="round"/><path d="M12 12V4M15 12V3M18 12V5" stroke="#fff" stroke-width="2.6"/></svg>
<div class="a" style="left:759px;top:668px;width:40px;height:40px;border-radius:50%;background:#3C4043"></div>
<svg class="a" style="left:773px;top:678px" width="12" height="20" viewBox="0 0 12 20"><circle cx="6" cy="3.5" r="2.2" fill="#fff"/><circle cx="6" cy="10" r="2.2" fill="#fff"/><circle cx="6" cy="16.5" r="2.2" fill="#fff"/></svg>
<div class="a" style="left:811px;top:668px;width:56px;height:40px;border-radius:20px;background:#EA4335"></div>
<svg class="a" style="left:825px;top:681px" width="28" height="14" viewBox="0 0 28 14"><path d="M14 3C9 3 4.5 4.5 1.8 7.2C1.2 7.8 1.2 8.5 1.8 9.1L4.3 11.3C4.8 11.8 5.6 11.8 6.1 11.4L9 9.2V6.2C12 5.3 16 5.3 19 6.2V9.2L21.9 11.4C22.4 11.8 23.2 11.8 23.7 11.3L26.2 9.1C26.8 8.5 26.8 7.8 26.2 7.2C23.5 4.5 19 3 14 3Z" fill="#fff"/></svg>
<svg class="a" style="left:1175px;top:677px" width="23" height="23" viewBox="0 0 23 23"><circle cx="11.5" cy="11.5" r="9.6" fill="none" stroke="#fff" stroke-width="2.8"/><rect x="10" y="10" width="3" height="7" fill="#fff"/><circle cx="11.5" cy="6.8" r="1.7" fill="#fff"/></svg>
<svg class="a" style="left:1221px;top:679px" width="26" height="18" viewBox="0 0 26 18"><circle cx="8.5" cy="5" r="3.4" fill="none" stroke="#fff" stroke-width="2.8"/><path d="M1.8 16.2V15C1.8 12.3 5 10.6 8.5 10.6S15.2 12.3 15.2 15V16.2Z" fill="none" stroke="#fff" stroke-width="2.8" stroke-linejoin="round"/><path d="M15 1.2A4 4 0 0 1 15 8.8A6 6 0 0 0 15 1.2Z" fill="#fff" stroke="#fff" stroke-width="2"/><path d="M17.5 10C21.5 10.5 25 12.5 25 15.5V17H19.5C19.5 14 18.8 11.8 17.5 10Z" fill="#fff"/></svg>
<div class="a" style="left:1235px;top:655px;width:28px;height:20px;border-radius:10px;background:#5F6368;color:#fff;font-size:12.5px;font-weight:bold;text-align:center;line-height:20px">32</div>
<svg class="a" style="left:1271px;top:677px" width="24" height="22" viewBox="0 0 24 22"><path d="M2 1.8H21.2V15.8H6L1.8 20.2V1.8Z" fill="none" stroke="#fff" stroke-width="2.8" stroke-linejoin="miter"/><path d="M5.5 6.2H17.5M5.5 9.5H17.5M5.5 12.8H12.5" stroke="#fff" stroke-width="2.2"/></svg>
<div class="a" style="left:1287px;top:670px;width:8px;height:8px;border-radius:50%;background:#8AB4F8;box-shadow:0 0 0 1.5px #202124"></div>
<svg class="a" style="left:1319px;top:677px" width="22" height="22" viewBox="0 0 22 22"><path d="M11 2.2L15 8.6H7Z" fill="none" stroke="#fff" stroke-width="2.8" stroke-linejoin="round"/><rect x="2" y="13" width="7" height="7" fill="none" stroke="#fff" stroke-width="2.8"/><circle cx="16" cy="16.5" r="3.5" fill="none" stroke="#fff" stroke-width="2.8"/></svg>
<!-- TASKBAR -->
<svg class="a" style="left:16px;top:739px" width="17" height="17" viewBox="0 0 17 17"><path d="M0 2.4L7 1.4V8H0ZM8 1.2L17 0V8H8ZM0 9H7V15.6L0 14.6ZM8 9H17V17L8 15.8Z" fill="#fff"/></svg>
<svg class="a" style="left:63px;top:739px" width="18" height="18" viewBox="0 0 18 18"><circle cx="11" cy="7" r="5.5" fill="none" stroke="#fff" stroke-width="1.3"/><path d="M7 11L1 17" stroke="#fff" stroke-width="1.5"/></svg>
<div class="a" style="left:112px;top:737px;width:22px;height:21px;background:#B30B00;border-radius:3px"></div>
<svg class="a" style="left:114px;top:739px" width="18" height="17" viewBox="0 0 18 17"><path d="M9 2C7.5 2 8 6 10 9.5C12 13 15.5 14 15.5 12.5C15.5 11 10 11 5.5 12.5C2 13.7 2.5 15.5 4 14.5C6 13 9.5 5 9 2Z" fill="none" stroke="#fff" stroke-width="1.4"/></svg>
<div class="a" style="left:161px;top:737px;width:18px;height:6px;background:linear-gradient(#D8D8D8,#6E6E6E);border-radius:2px 2px 0 0"></div>
<div class="a" style="left:163px;top:743px;width:14px;height:11px;background:linear-gradient(#A8C8E8,#5A7E9E)"></div>
<div class="a" style="left:159px;top:752px;width:16px;height:4px;background:#7A7A7A"></div>
<div class="a" style="left:172px;top:746px;width:12px;height:13px;background:#E8E8E8;border:1px solid #777"></div>
<div class="a" style="left:209px;top:736px;width:25px;height:25px;border-radius:50%;background:conic-gradient(from -60deg,#DB4437 0 120deg,#F4B400 120deg 240deg,#0F9D58 240deg 360deg)"></div>
<div class="a" style="left:215px;top:742px;width:13px;height:13px;border-radius:50%;background:#4285F4;box-shadow:0 0 0 2px #fff"></div>
<div class="a" style="left:222px;top:750px;width:11px;height:10px;border-radius:50%;background:#5A7A9A"></div>
<div class="a" style="left:259px;top:740px;width:22px;height:17px;background:#F4C145;border-radius:1px"></div>
<div class="a" style="left:259px;top:738px;width:9px;height:3px;background:#E0A82A"></div>
<div class="a" style="left:264px;top:749px;width:12px;height:8px;background:#2A6FB8"></div>
<div class="a" style="left:306px;top:737px;width:25px;height:22px;background:linear-gradient(90deg,#8B2A6A 0 33%,#C03A2A 33% 66%,#2A6A9A 66%)"></div>
<div class="a" style="left:306px;top:744px;width:25px;height:3px;background:#E8C04A"></div>
<div class="a" style="left:306px;top:751px;width:25px;height:8px;background:linear-gradient(90deg,#3A8A3A 0 33%,#6AAA2A 33% 66%,#2A7A4A 66%)"></div>
<div class="a" style="left:315px;top:740px;width:7px;height:12px;background:#D8A040;border-radius:2px"></div>
<div class="a" style="left:356px;top:737px;width:23px;height:22px;background:#077568;border-radius:2px"></div>
<div class="a" style="left:358px;top:740px;font-size:13px;font-weight:bold;color:#fff;line-height:16px">P</div>
<div class="a" style="left:368px;top:740px;width:10px;height:16px;border-left:2px solid #fff;border-right:2px solid #fff;background:repeating-linear-gradient(#fff 0 2px,#077568 2px 4px)"></div>
<div class="a" style="left:405px;top:736px;width:25px;height:25px;border-radius:50%;background:conic-gradient(from -60deg,#DB4437 0 120deg,#F4B400 120deg 240deg,#0F9D58 240deg 360deg)"></div>
<div class="a" style="left:411px;top:742px;width:13px;height:13px;border-radius:50%;background:#4285F4;box-shadow:0 0 0 2px #fff"></div>
<div class="a" style="left:418px;top:750px;width:11px;height:10px;border-radius:50%;background:#C8B820"></div>
<div class="a" style="left:457px;top:736px;width:18px;height:24px;background:#8A9AA6;border-radius:1px"></div>
<div class="a" style="left:459px;top:738px;width:14px;height:5px;background:#7ECBF0"></div>
<div class="a" style="left:459px;top:745px;width:14px;height:13px;background:repeating-linear-gradient(90deg,#E8ECEE 0 4px,transparent 4px 5px);-webkit-mask:repeating-linear-gradient(#000 0 3px,transparent 3px 4.5px)"></div>
<div class="a" style="left:469px;top:751px;width:4px;height:7px;background:#2B5797"></div>
<div class="a" style="left:504px;top:737px;width:22px;height:22px;border-radius:50%;background:#2AA3DE"></div>
<svg class="a" style="left:508px;top:742px" width="14" height="12" viewBox="0 0 14 12"><path d="M1 5.5L12.5 1L10.5 11L7 8L5 10L5.3 7L11 2.5L4 6.5Z" fill="#fff"/></svg>
<div class="a" style="left:552px;top:736px;width:25px;height:25px;border-radius:50%;background:conic-gradient(from -60deg,#DB4437 0 120deg,#F4B400 120deg 240deg,#0F9D58 240deg 360deg)"></div>
<div class="a" style="left:558px;top:742px;width:13px;height:13px;border-radius:50%;background:#4285F4;box-shadow:0 0 0 2px #fff"></div>
<div class="a" style="left:564px;top:748px;width:14px;height:14px;border-radius:50%;background:radial-gradient(circle at 50% 45%,#D8A898 0 3px,#3A2A24 5px,#E8E8E8 7px)"></div>
<div class="a" style="left:544px;top:765px;width:40px;height:3px;background:#99C4EA"></div>
<div class="a" style="left:601px;top:736px;width:23px;height:24px;background:#2B5797;border-radius:1px"></div>
<div class="a" style="left:612px;top:738px;width:12px;height:20px;background:repeating-linear-gradient(#fff 0 2px,#2B5797 2px 4px);border-left:1px solid #fff"></div>
<div class="a" style="left:602px;top:741px;font-size:12px;font-weight:bold;color:#fff;line-height:14px">W</div>
<div class="a" style="left:593px;top:765px;width:40px;height:3px;background:#99C4EA"></div>
<div class="a" style="left:1139px;top:728px;width:24px;height:40px;background:#2A3844"></div>
<svg class="a" style="left:1143px;top:743px" width="14" height="9" viewBox="0 0 14 9"><path d="M1 7.5L7 1.5L13 7.5" fill="none" stroke="#fff" stroke-width="1.3"/></svg>
<svg class="a" style="left:1168px;top:740px" width="13" height="17" viewBox="0 0 13 17"><rect x="3.5" y="0.5" width="6" height="10" rx="3" fill="#fff"/><path d="M1.5 8A5 5 0 0 0 11.5 8M6.5 13V16M3.5 16H9.5" fill="none" stroke="#fff" stroke-width="1.2"/></svg>
<svg class="a" style="left:1192px;top:740px" width="15" height="17" viewBox="0 0 15 17"><path d="M3 2A7 7 0 0 1 12 2M3 15A7 7 0 0 0 12 15" fill="none" stroke="#fff" stroke-width="1.1"/><rect x="1.5" y="5.5" width="8" height="6.5" rx="1" fill="none" stroke="#fff" stroke-width="1.2"/><path d="M9.5 8L13.5 5.5V12L9.5 9.5Z" fill="none" stroke="#fff" stroke-width="1.2"/></svg>
<div class="a" style="left:1218px;top:741px;font-size:12px;color:#fff;line-height:16px;white-space:nowrap">УКР</div>
<div class="a" style="left:1254px;top:731px;width:52px;text-align:center;font-size:11.5px;color:#fff;line-height:16px;white-space:nowrap">11:11</div>
<div class="a" style="left:1250px;top:749px;width:60px;text-align:center;font-size:11.5px;color:#fff;line-height:16px;white-space:nowrap">11.10.2023</div>
<svg class="a" style="left:1324px;top:740px" width="20" height="18" viewBox="0 0 20 18"><path d="M1 1H19V13H8L4 17V13H1Z" fill="#fff"/><path d="M4 4.5H16M4 7H16M4 9.5H16" stroke="#1A2A35" stroke-width="1"/></svg>
<div class="a" style="left:1332px;top:747px;width:17px;height:17px;border-radius:50%;background:#1F4F7E;border:1.5px solid #9AB8D6;color:#fff;font-size:11px;font-weight:bold;text-align:center;line-height:14px">4</div>
<div class="a" style="left:1361px;top:728px;width:1px;height:40px;background:#5A6670"></div>
</body></html>
